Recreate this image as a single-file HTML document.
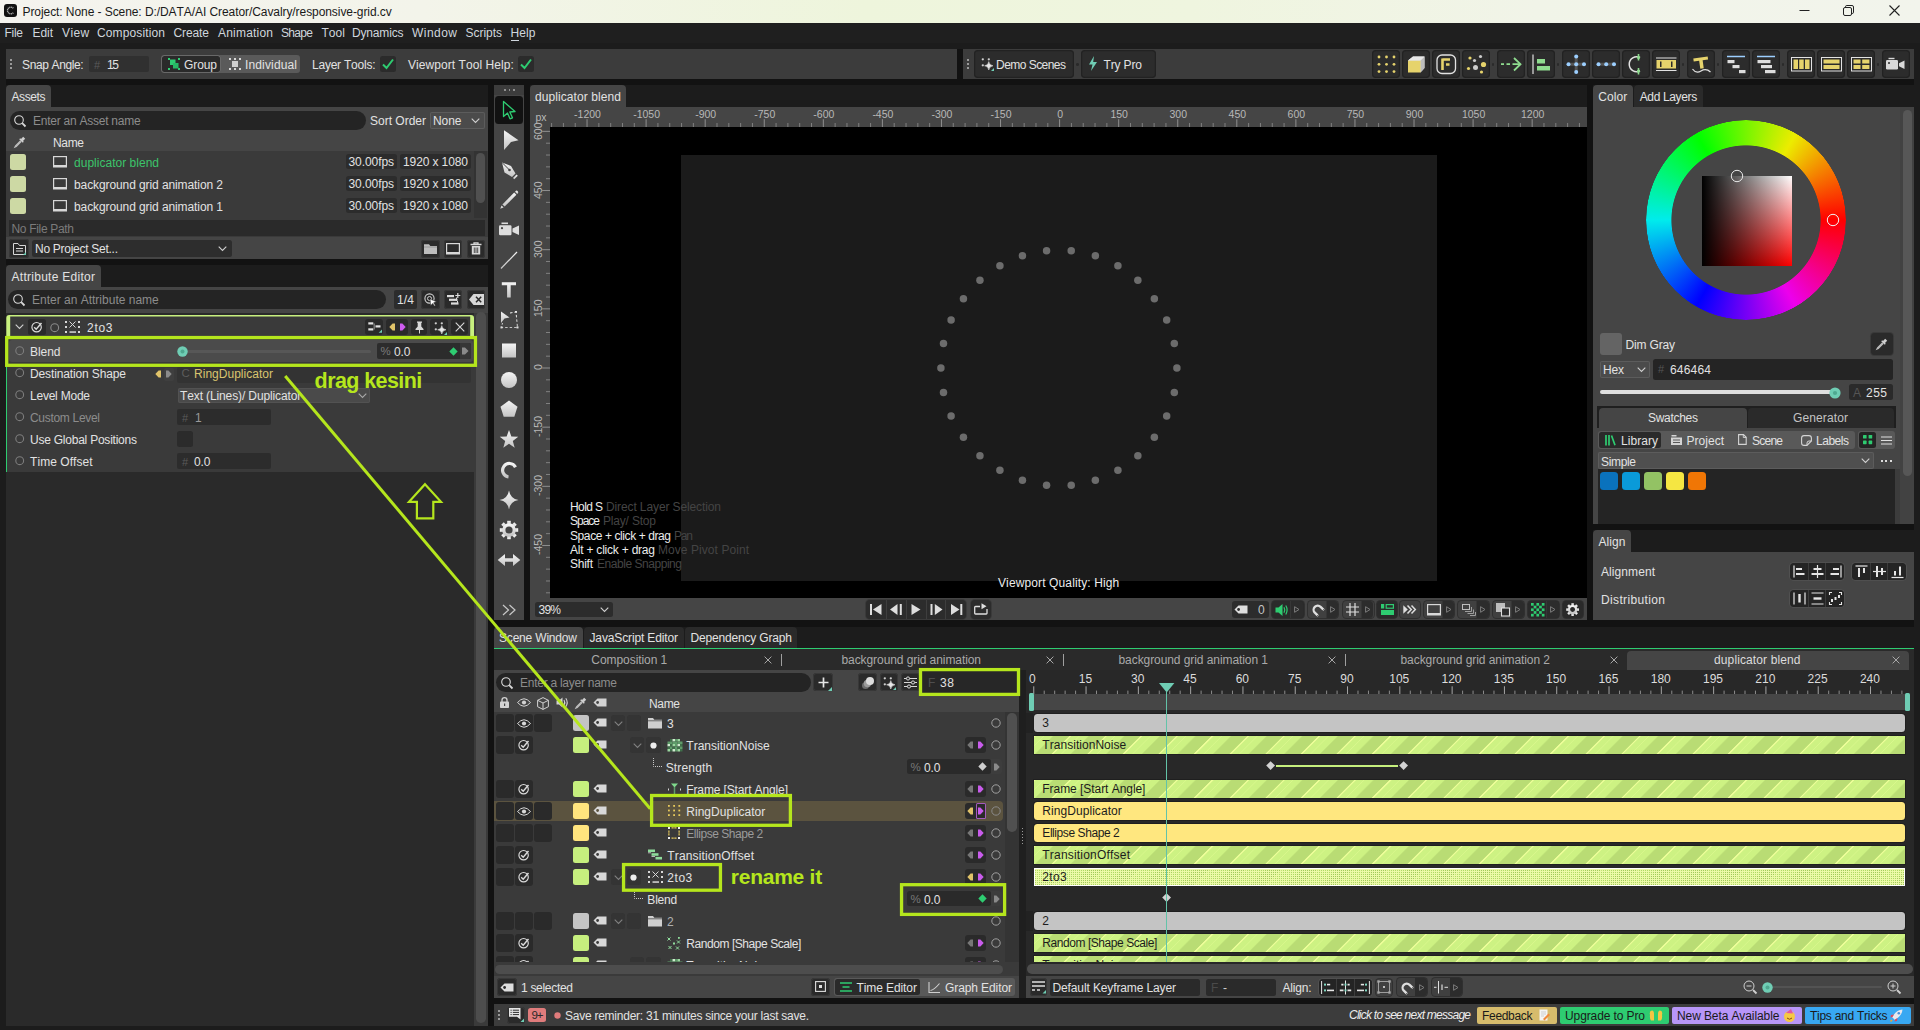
<!DOCTYPE html>
<html><head><meta charset="utf-8"><title>Cavalry</title>
<style>
html,body{margin:0;padding:0;background:#1c1c1c;}
body{width:1920px;height:1030px;position:relative;overflow:hidden;font-family:"Liberation Sans",sans-serif;font-kerning:none;}
div,span.t,svg{position:absolute;}
span.t{white-space:pre;}
svg{overflow:visible;}
</style></head><body>
<div style="left:0.00px;top:0.00px;width:1920.00px;height:23.00px;background:linear-gradient(90deg,#f4f3ee 0%,#f3f4ea 22%,#eef5dc 45%,#eff5df 62%,#f1f4e8 80%,#f2f4ec 100%);"></div>
<svg style="left:3.50px;top:4.30px;" width="13" height="13" viewBox="0 0 13 13"><rect x="0" y="0" width="13" height="13" rx="3" fill="#111"/><path d="M9.3 4.3A3.3 3.3 0 1 0 9.3 8.7" fill="none" stroke="#aaa" stroke-width="1.5" stroke-dasharray="1.1 0.5"/></svg>
<span class="t" style="left:22.50px;top:3.64px;font-size:12px;line-height:16px;color:#1a1a1a;letter-spacing:-0.073px;">Project: None - Scene: D:/DATA/AI Creator/Cavalry/responsive-grid.cv</span>
<svg style="left:1798.50px;top:4.00px;" width="12" height="12" viewBox="0 0 12 12"><path d="M0.5 6.5H10.5" stroke="#222" stroke-width="1"/></svg>
<svg style="left:1843.00px;top:5.00px;" width="12" height="12" viewBox="0 0 12 12"><rect x="0.5" y="2.5" width="8" height="8" rx="1.5" fill="none" stroke="#222"/><path d="M2.5 2.5V1.8Q2.5 0.5 3.8 0.5H9Q10.5 0.5 10.5 2V7.2Q10.5 8.5 9.2 8.5H8.6" fill="none" stroke="#222"/></svg>
<svg style="left:1889.00px;top:5.00px;" width="12" height="12" viewBox="0 0 12 12"><path d="M0.5 0.5L10.5 10.5M10.5 0.5L0.5 10.5" stroke="#222" stroke-width="1.1"/></svg>
<div style="left:0.00px;top:23.00px;width:1920.00px;height:20.00px;background:#1f1f1f;"></div>
<span class="t" style="left:4.50px;top:25.14px;font-size:12px;line-height:16px;color:#cfd6dd;letter-spacing:-0.279px;">File</span>
<span class="t" style="left:32.50px;top:25.14px;font-size:12px;line-height:16px;color:#cfd6dd;letter-spacing:-0.059px;">Edit</span>
<span class="t" style="left:62.00px;top:25.14px;font-size:12px;line-height:16px;color:#cfd6dd;letter-spacing:0.402px;">View</span>
<span class="t" style="left:97.00px;top:25.14px;font-size:12px;line-height:16px;color:#cfd6dd;letter-spacing:0.130px;">Composition</span>
<span class="t" style="left:173.50px;top:25.14px;font-size:12px;line-height:16px;color:#cfd6dd;letter-spacing:-0.104px;">Create</span>
<span class="t" style="left:218.00px;top:25.14px;font-size:12px;line-height:16px;color:#cfd6dd;letter-spacing:0.205px;">Animation</span>
<span class="t" style="left:281.00px;top:25.14px;font-size:12px;line-height:16px;color:#cfd6dd;letter-spacing:-0.675px;">Shape</span>
<span class="t" style="left:321.50px;top:25.14px;font-size:12px;line-height:16px;color:#cfd6dd;">Tool</span>
<span class="t" style="left:352.00px;top:25.14px;font-size:12px;line-height:16px;color:#cfd6dd;letter-spacing:-0.168px;">Dynamics</span>
<span class="t" style="left:412.00px;top:25.14px;font-size:12px;line-height:16px;color:#cfd6dd;letter-spacing:0.464px;">Window</span>
<span class="t" style="left:465.50px;top:25.14px;font-size:12px;line-height:16px;color:#cfd6dd;letter-spacing:-0.029px;">Scripts</span>
<span class="t" style="left:510.50px;top:25.14px;font-size:12px;line-height:16px;color:#cfd6dd;letter-spacing:0.106px;">Help</span>
<div style="left:510.50px;top:39.50px;width:8.00px;height:1.00px;background:#cfd6dd;"></div>
<div style="left:6.00px;top:49.00px;width:1908.00px;height:976.80px;background:#121212;"></div>
<div style="left:6.00px;top:85.00px;width:482.00px;height:22.00px;background:#1c1c1c;"></div>
<div style="left:6.00px;top:265.00px;width:482.00px;height:22.00px;background:#1c1c1c;"></div>
<div style="left:530.00px;top:85.00px;width:1057.00px;height:22.00px;background:#1c1c1c;"></div>
<div style="left:1593.00px;top:85.00px;width:321.00px;height:22.00px;background:#1c1c1c;"></div>
<div style="left:1593.00px;top:530.00px;width:321.00px;height:22.00px;background:#1c1c1c;"></div>
<div style="left:494.00px;top:627.00px;width:1420.00px;height:21.50px;background:#1c1c1c;"></div>
<div style="left:6.00px;top:49.00px;width:951.00px;height:30.00px;background:#3c3c3c;"></div>
<div style="left:10.20px;top:58.50px;width:2.00px;height:2.00px;background:#9a9a9a;"></div>
<div style="left:10.20px;top:62.70px;width:2.00px;height:2.00px;background:#9a9a9a;"></div>
<div style="left:10.20px;top:66.80px;width:2.00px;height:2.00px;background:#9a9a9a;"></div>
<span class="t" style="left:22.00px;top:56.64px;font-size:12px;line-height:16px;color:#e2e2e2;letter-spacing:-0.372px;">Snap Angle:</span>
<div style="left:89.00px;top:56.00px;width:60.00px;height:16.00px;background:#303030;border-radius:2px;"></div>
<span class="t" style="left:94.00px;top:57.63px;font-size:11px;line-height:14px;color:#5a5a5a;">#</span>
<span class="t" style="left:107.00px;top:56.64px;font-size:12px;line-height:16px;color:#e2e2e2;letter-spacing:-1.348px;">15</span>
<div style="left:161.00px;top:55.00px;width:139.00px;height:18.00px;background:#5a5a5a;border-radius:3px;"></div>
<div style="left:162.00px;top:56.00px;width:58.00px;height:16.00px;background:#2a2a2a;border-radius:2.5px;box-shadow:0 0 0 0.5px #777;"></div>
<svg style="left:168.00px;top:58.00px;" width="12" height="12" viewBox="0 0 12 12"><rect x="0" y="0" width="2" height="2" fill="#2ecc71"/><rect x="10" y="0" width="2" height="2" fill="#2ecc71"/><rect x="0" y="10" width="2" height="2" fill="#2ecc71"/><rect x="10" y="10" width="2" height="2" fill="#2ecc71"/><rect x="2" y="1.5" width="5.5" height="5.5" fill="#2ecc71"/><rect x="5" y="5" width="5.5" height="5.5" fill="#27b865"/></svg>
<span class="t" style="left:184.00px;top:56.64px;font-size:12px;line-height:16px;color:#e2e2e2;letter-spacing:-0.088px;">Group</span>
<svg style="left:229.00px;top:58.00px;" width="12" height="12" viewBox="0 0 12 12"><rect x="0" y="0" width="2" height="2" fill="#d8d8d8"/><rect x="10" y="0" width="2" height="2" fill="#d8d8d8"/><rect x="0" y="10" width="2" height="2" fill="#d8d8d8"/><rect x="10" y="10" width="2" height="2" fill="#d8d8d8"/><rect x="5" y="0" width="2" height="2" fill="#d8d8d8"/><rect x="5" y="10" width="2" height="2" fill="#d8d8d8"/><rect x="3" y="3" width="6" height="6" fill="#cfcfcf"/></svg>
<span class="t" style="left:245.00px;top:56.64px;font-size:12px;line-height:16px;color:#e2e2e2;letter-spacing:0.144px;">Individual</span>
<span class="t" style="left:312.00px;top:56.64px;font-size:12px;line-height:16px;color:#e2e2e2;letter-spacing:-0.226px;">Layer Tools:</span>
<div style="left:380.00px;top:56.00px;width:16.00px;height:16.00px;background:#2b2b2b;border-radius:2.5px;"></div>
<svg style="left:380.00px;top:56.00px;" width="16" height="16" viewBox="0 0 16 16"><path d="M3 8.5L6.5 12L13 3.5" fill="none" stroke="#2ecc71" stroke-width="2"/></svg>
<span class="t" style="left:408.00px;top:56.64px;font-size:12px;line-height:16px;color:#e2e2e2;letter-spacing:0.058px;">Viewport Tool Help:</span>
<div style="left:518.00px;top:56.00px;width:16.00px;height:16.00px;background:#2b2b2b;border-radius:2.5px;"></div>
<svg style="left:518.00px;top:56.00px;" width="16" height="16" viewBox="0 0 16 16"><path d="M3 8.5L6.5 12L13 3.5" fill="none" stroke="#2ecc71" stroke-width="2"/></svg>
<div style="left:963.00px;top:49.00px;width:951.00px;height:30.00px;background:#3c3c3c;"></div>
<div style="left:967.00px;top:58.50px;width:2.00px;height:2.00px;background:#9a9a9a;"></div>
<div style="left:967.00px;top:62.70px;width:2.00px;height:2.00px;background:#9a9a9a;"></div>
<div style="left:967.00px;top:66.80px;width:2.00px;height:2.00px;background:#9a9a9a;"></div>
<div style="left:974.00px;top:50.00px;width:99.50px;height:27.50px;background:#2c2c2c;border-radius:4px;box-shadow:0 0 0 1.2px #222 inset;"></div>
<div style="left:1081.00px;top:50.00px;width:75.00px;height:27.50px;background:#2c2c2c;border-radius:4px;box-shadow:0 0 0 1.2px #222 inset;"></div>
<svg style="left:980.00px;top:57.00px;" width="14" height="14" viewBox="0 0 14 14"><path d="M8.8 4.6Q9.3 8.3 13 8.8Q9.3 9.3 8.8 13Q8.3 9.3 4.6 8.8Q8.3 8.3 8.8 4.6Z" fill="#e8e8e8" stroke="#e8e8e8" stroke-width="0.5"/><circle cx="2.8" cy="2.3" r="1.15" fill="#cfcfcf"/><circle cx="8.8" cy="2.3" r="1.15" fill="#cfcfcf"/><circle cx="2.8" cy="8.3" r="1.15" fill="#cfcfcf"/><path d="M14 11V14H11Z" fill="#6fcdb4"/></svg>
<span class="t" style="left:996.00px;top:57.24px;font-size:12px;line-height:16px;color:#e2e2e2;letter-spacing:-0.537px;">Demo Scenes</span>
<div style="left:1076.00px;top:63.00px;width:2.60px;height:2.60px;background:#2a2a2a;border-radius:1.3px;"></div>
<svg style="left:1088.00px;top:56.00px;" width="10" height="16" viewBox="0 0 10 16"><path d="M6 0L1 8.5H4.5L3 15L9 6H5.2Z" fill="#6fcdb4"/></svg>
<span class="t" style="left:1103.50px;top:57.24px;font-size:12px;line-height:16px;color:#e2e2e2;letter-spacing:-0.148px;">Try Pro</span>
<div style="left:1372.00px;top:50.00px;width:27.50px;height:27.50px;background:#2c2c2c;border-radius:4px;box-shadow:0 0 0 1.2px #222 inset;"></div>
<div style="left:1402.00px;top:50.00px;width:27.50px;height:27.50px;background:#2c2c2c;border-radius:4px;box-shadow:0 0 0 1.2px #222 inset;"></div>
<div style="left:1432.00px;top:50.00px;width:27.50px;height:27.50px;background:#2c2c2c;border-radius:4px;box-shadow:0 0 0 1.2px #222 inset;"></div>
<div style="left:1462.00px;top:50.00px;width:27.50px;height:27.50px;background:#2c2c2c;border-radius:4px;box-shadow:0 0 0 1.2px #222 inset;"></div>
<div style="left:1497.00px;top:50.00px;width:27.50px;height:27.50px;background:#2c2c2c;border-radius:4px;box-shadow:0 0 0 1.2px #222 inset;"></div>
<div style="left:1527.00px;top:50.00px;width:27.50px;height:27.50px;background:#2c2c2c;border-radius:4px;box-shadow:0 0 0 1.2px #222 inset;"></div>
<div style="left:1562.00px;top:50.00px;width:27.50px;height:27.50px;background:#2c2c2c;border-radius:4px;box-shadow:0 0 0 1.2px #222 inset;"></div>
<div style="left:1592.00px;top:50.00px;width:27.50px;height:27.50px;background:#2c2c2c;border-radius:4px;box-shadow:0 0 0 1.2px #222 inset;"></div>
<div style="left:1622.00px;top:50.00px;width:27.50px;height:27.50px;background:#2c2c2c;border-radius:4px;box-shadow:0 0 0 1.2px #222 inset;"></div>
<div style="left:1652.00px;top:50.00px;width:27.50px;height:27.50px;background:#2c2c2c;border-radius:4px;box-shadow:0 0 0 1.2px #222 inset;"></div>
<div style="left:1687.00px;top:50.00px;width:27.50px;height:27.50px;background:#2c2c2c;border-radius:4px;box-shadow:0 0 0 1.2px #222 inset;"></div>
<div style="left:1722.00px;top:50.00px;width:27.50px;height:27.50px;background:#2c2c2c;border-radius:4px;box-shadow:0 0 0 1.2px #222 inset;"></div>
<div style="left:1752.00px;top:50.00px;width:27.50px;height:27.50px;background:#2c2c2c;border-radius:4px;box-shadow:0 0 0 1.2px #222 inset;"></div>
<div style="left:1787.00px;top:50.00px;width:27.50px;height:27.50px;background:#2c2c2c;border-radius:4px;box-shadow:0 0 0 1.2px #222 inset;"></div>
<div style="left:1817.00px;top:50.00px;width:27.50px;height:27.50px;background:#2c2c2c;border-radius:4px;box-shadow:0 0 0 1.2px #222 inset;"></div>
<div style="left:1847.00px;top:50.00px;width:27.50px;height:27.50px;background:#2c2c2c;border-radius:4px;box-shadow:0 0 0 1.2px #222 inset;"></div>
<div style="left:1882.00px;top:50.00px;width:27.50px;height:27.50px;background:#2c2c2c;border-radius:4px;box-shadow:0 0 0 1.2px #222 inset;"></div>
<div style="left:1491.70px;top:63.00px;width:2.60px;height:2.60px;background:#2a2a2a;border-radius:1.3px;"></div>
<div style="left:1556.70px;top:63.00px;width:2.60px;height:2.60px;background:#2a2a2a;border-radius:1.3px;"></div>
<div style="left:1681.70px;top:63.00px;width:2.60px;height:2.60px;background:#2a2a2a;border-radius:1.3px;"></div>
<div style="left:1716.70px;top:63.00px;width:2.60px;height:2.60px;background:#2a2a2a;border-radius:1.3px;"></div>
<div style="left:1781.70px;top:63.00px;width:2.60px;height:2.60px;background:#2a2a2a;border-radius:1.3px;"></div>
<div style="left:1876.70px;top:63.00px;width:2.60px;height:2.60px;background:#2a2a2a;border-radius:1.3px;"></div>
<svg style="left:1372.50px;top:50.50px;" width="26.5" height="26.5" viewBox="0 0 26.5 26.5"><circle cx="6" cy="6" r="1.4" fill="#e6d36c"/><circle cx="6" cy="13.3" r="1.4" fill="#e6d36c"/><circle cx="6" cy="20.6" r="1.4" fill="#e6d36c"/><circle cx="13.5" cy="6" r="1.4" fill="#e6d36c"/><circle cx="13.5" cy="13.3" r="1.4" fill="#e6d36c"/><circle cx="13.5" cy="20.6" r="1.4" fill="#e6d36c"/><circle cx="21" cy="6" r="1.4" fill="#e6d36c"/><circle cx="21" cy="13.3" r="1.4" fill="#e6d36c"/><circle cx="21" cy="20.6" r="1.4" fill="#e6d36c"/></svg>
<svg style="left:1402.50px;top:50.50px;" width="26.5" height="26.5" viewBox="0 0 26.5 26.5"><path d="M5 9.5L10 5.5H21.5V17L17.5 21.5" fill="#d6d6d6"/><path d="M17.5 9.5L21.5 5.5V17L17.5 21.5Z" fill="#bdbdbd"/><rect x="5" y="9.5" width="12.5" height="12" fill="#e6d36c"/><path d="M5 9.5L10 5.5H21.5L17.5 9.5Z" fill="#e8e8e8"/></svg>
<svg style="left:1432.50px;top:50.50px;" width="26.5" height="26.5" viewBox="0 0 26.5 26.5"><rect x="4" y="4" width="18.5" height="18.5" rx="5" fill="none" stroke="#e2e2e2" stroke-width="1.3"/><path d="M9.5 7.5V19M9.5 8.5H17M13 13.5H16.5" stroke="#e6d36c" stroke-width="2.6" fill="none"/></svg>
<svg style="left:1462.50px;top:50.50px;" width="26.5" height="26.5" viewBox="0 0 26.5 26.5"><circle cx="7" cy="7" r="1.6" fill="#e6d36c"/><circle cx="17.5" cy="5.5" r="1.6" fill="#ccc"/><circle cx="11.5" cy="9.5" r="1.6" fill="#ccc"/><circle cx="20.5" cy="13.5" r="2.6" fill="#e6d36c"/><circle cx="12.5" cy="16.5" r="2.5" fill="#ccc"/><circle cx="5.5" cy="17.5" r="1.6" fill="#e6d36c"/><circle cx="18.5" cy="21" r="1.6" fill="#e6d36c"/></svg>
<svg style="left:1497.50px;top:50.50px;" width="26.5" height="26.5" viewBox="0 0 26.5 26.5"><path d="M3 13.2H6M8.5 13.2H12M14.5 13.2H22" stroke="#8fdc8f" stroke-width="1.8"/><path d="M16 7L22.5 13.2L16 19.5" fill="none" stroke="#8fdc8f" stroke-width="1.8"/></svg>
<svg style="left:1527.50px;top:50.50px;" width="26.5" height="26.5" viewBox="0 0 26.5 26.5"><path d="M5 3.5V23" stroke="#e2e2e2" stroke-width="1.2"/><rect x="9" y="8" width="8" height="4.5" fill="#8fdc8f"/><rect x="9" y="15" width="13" height="4.5" fill="#8fdc8f"/></svg>
<svg style="left:1562.50px;top:50.50px;" width="26.5" height="26.5" viewBox="0 0 26.5 26.5"><path d="M13.2 6V20.5M6 13.2H20.5" stroke="#555" stroke-width="3"/><circle cx="13.2" cy="5.5" r="2" fill="#9ccfff"/><circle cx="13.2" cy="13.2" r="2" fill="#9ccfff"/><circle cx="13.2" cy="21" r="2" fill="#9ccfff"/><circle cx="5.5" cy="13.2" r="2" fill="#9ccfff"/><circle cx="21" cy="13.2" r="2" fill="#9ccfff"/></svg>
<svg style="left:1592.50px;top:50.50px;" width="26.5" height="26.5" viewBox="0 0 26.5 26.5"><path d="M5 13.2H21" stroke="#555" stroke-width="3"/><circle cx="5.5" cy="13.2" r="2" fill="#9ccfff"/><circle cx="13.2" cy="13.2" r="2" fill="#9ccfff"/><circle cx="21" cy="13.2" r="2" fill="#9ccfff"/></svg>
<svg style="left:1622.50px;top:50.50px;" width="26.5" height="26.5" viewBox="0 0 26.5 26.5"><path d="M17 6.5A7.5 7.5 0 1 0 17 20" fill="none" stroke="#e2e2e2" stroke-width="1.5"/><path d="M15.5 3V9.5M15.5 17V23.5" stroke="#8fdc8f" stroke-width="1.6"/><circle cx="15.5" cy="6.5" r="1.6" fill="#8fdc8f"/><circle cx="15.5" cy="20" r="1.6" fill="#8fdc8f"/></svg>
<svg style="left:1652.50px;top:50.50px;" width="26.5" height="26.5" viewBox="0 0 26.5 26.5"><rect x="3.5" y="9" width="19.5" height="8.5" fill="#e6d36c"/><rect x="7" y="10.5" width="1.5" height="5.5" fill="#2b2b2b"/><rect x="18" y="10.5" width="1.5" height="5.5" fill="#2b2b2b"/><path d="M3 7H23.5M3 19.5H23.5" stroke="#e2e2e2" stroke-width="1"/></svg>
<svg style="left:1687.50px;top:50.50px;" width="26.5" height="26.5" viewBox="0 0 26.5 26.5"><path d="M6 6.5H20.5V9.5H15V17.5H11.5V9.5H6Z" fill="#e6d36c" transform="rotate(-8 13 12)"/><path d="M4.5 18Q8 23 13 20T22.5 21" fill="none" stroke="#e2e2e2" stroke-width="1.2"/></svg>
<svg style="left:1722.50px;top:50.50px;" width="26.5" height="26.5" viewBox="0 0 26.5 26.5"><path d="M4 5.5H22" stroke="#9ccfff" stroke-width="1.5"/><rect x="4.5" y="9" width="7" height="3.2" fill="#ddd"/><rect x="9.5" y="14" width="7" height="3.2" fill="#ddd"/><rect x="16" y="19" width="6.5" height="3.2" fill="#ddd"/></svg>
<svg style="left:1752.50px;top:50.50px;" width="26.5" height="26.5" viewBox="0 0 26.5 26.5"><path d="M4 5.5H22" stroke="#9ccfff" stroke-width="1.5"/><rect x="4.5" y="9" width="13" height="3.2" fill="#ddd"/><rect x="8" y="14" width="11" height="3.2" fill="#ddd"/><rect x="12" y="19" width="10.5" height="3.2" fill="#ddd"/></svg>
<svg style="left:1787.50px;top:50.50px;" width="26.5" height="26.5" viewBox="0 0 26.5 26.5"><rect x="3.5" y="6.5" width="20" height="13.5" fill="none" stroke="#e2e2e2" stroke-width="1"/><rect x="5.5" y="8.5" width="4.5" height="9.5" fill="#e6d36c"/><rect x="11.2" y="8.5" width="4.5" height="9.5" fill="#e6d36c"/><rect x="17" y="8.5" width="4.5" height="9.5" fill="#e6d36c"/></svg>
<svg style="left:1817.50px;top:50.50px;" width="26.5" height="26.5" viewBox="0 0 26.5 26.5"><rect x="3.5" y="6.5" width="20" height="13.5" fill="none" stroke="#e2e2e2" stroke-width="1"/><rect x="5.5" y="8.5" width="16" height="4" fill="#e6d36c"/><rect x="5.5" y="14" width="16" height="4" fill="#e6d36c"/></svg>
<svg style="left:1847.50px;top:50.50px;" width="26.5" height="26.5" viewBox="0 0 26.5 26.5"><rect x="3.5" y="6.5" width="20" height="13.5" fill="none" stroke="#e2e2e2" stroke-width="1"/><rect x="5.5" y="8.5" width="7" height="4" fill="#e6d36c"/><rect x="14.2" y="8.5" width="7.2" height="4" fill="#e6d36c"/><rect x="5.5" y="14" width="7" height="4" fill="#e6d36c"/><rect x="14.2" y="14" width="7.2" height="4" fill="#e6d36c"/></svg>
<svg style="left:1886.00px;top:57.00px;" width="19" height="13" viewBox="0 0 19 13"><rect x="0" y="3" width="12" height="9.5" rx="1.2" fill="#d8d8d8"/><path d="M13 6.2L18.5 3.5V12L13 9.3Z" fill="#d8d8d8"/><rect x="2.5" y="0.8" width="6" height="1.4" fill="#d8d8d8"/><circle cx="3" cy="6" r="1" fill="#2b2b2b"/></svg>
<div style="left:6.00px;top:85.00px;width:45.00px;height:22.50px;background:#454545;border-radius:4px 4px 0 0;"></div>
<span class="t" style="left:11.50px;top:89.44px;font-size:12px;line-height:16px;color:#e2e2e2;letter-spacing:-0.402px;">Assets</span>
<div style="left:6.00px;top:107.00px;width:482.00px;height:151.60px;background:#454545;"></div>
<div style="left:6.00px;top:151.00px;width:482.00px;height:86.00px;background:#3a3a3a;"></div>
<div style="left:474.00px;top:151.00px;width:12.50px;height:67.00px;background:#333;"></div>
<div style="left:9.50px;top:110.50px;width:356.50px;height:19.50px;background:#242424;border-radius:10px;"></div>
<svg style="left:13.50px;top:114.50px;" width="12" height="12" viewBox="0 0 12 12"><circle cx="5" cy="5" r="4.3" fill="none" stroke="#d8d8d8" stroke-width="1.1"/><path d="M8.2 8.2L11.5 11.5" stroke="#d8d8d8" stroke-width="1.8"/></svg>
<span class="t" style="left:33.00px;top:112.64px;font-size:12px;line-height:16px;color:#8c8c8c;letter-spacing:-0.245px;">Enter an Asset name</span>
<span class="t" style="left:370.00px;top:112.64px;font-size:12px;line-height:16px;color:#e2e2e2;">Sort Order</span>
<div style="left:429.50px;top:111.50px;width:55.00px;height:17.00px;background:#4b4b4b;border-radius:2px;box-shadow:0 0 0 1px #5c5c5c inset;"></div>
<span class="t" style="left:433.00px;top:112.64px;font-size:12px;line-height:16px;color:#e2e2e2;letter-spacing:-0.063px;">None</span>
<svg style="left:471.00px;top:118.00px;" width="9" height="6" viewBox="0 0 9 6"><path d="M0.7 0.7L4.5 4.5L8.3 0.7" fill="none" stroke="#d0d0d0" stroke-width="1.1"/></svg>
<svg style="left:14.00px;top:136.00px;" width="12" height="12" viewBox="0 0 12 12"><path d="M9.2 0.8L11.2 2.8L9 5L9.8 5.8L8.8 6.8L5.2 3.2L6.2 2.2L7 3Z" fill="#cfcfcf"/><path d="M6.6 4.6L1.5 9.7L0.8 11.2L2.3 10.5L7.4 5.4" fill="none" stroke="#bdbdbd" stroke-width="1.1"/></svg>
<span class="t" style="left:53.00px;top:135.44px;font-size:12px;line-height:16px;color:#e2e2e2;letter-spacing:-0.337px;">Name</span>
<div style="left:10.00px;top:154.00px;width:16.00px;height:16.00px;background:#cdd9a4;border-radius:2.5px;"></div>
<svg style="left:53.00px;top:155.70px;" width="14" height="12" viewBox="0 0 14 12"><rect x="0.6" y="0.6" width="12.8" height="9" fill="none" stroke="#d8d8d8" stroke-width="1.2"/><rect x="0" y="9.2" width="14" height="2.3" fill="#d8d8d8"/></svg>
<span class="t" style="left:74.00px;top:154.64px;font-size:12px;line-height:16px;color:#3cc46a;letter-spacing:0.018px;">duplicator blend</span>
<div style="left:346.00px;top:154.20px;width:51.00px;height:15.30px;background:#2c2c2c;border-radius:2.5px;"></div>
<span class="t" style="left:348.50px;top:153.84px;font-size:12px;line-height:16px;color:#e2e2e2;letter-spacing:-0.077px;">30.00fps</span>
<div style="left:400.00px;top:154.20px;width:71.00px;height:15.30px;background:#2c2c2c;border-radius:2.5px;"></div>
<span class="t" style="left:403.00px;top:153.84px;font-size:12px;line-height:16px;color:#e2e2e2;letter-spacing:-0.106px;">1920 x 1080</span>
<div style="left:10.00px;top:176.00px;width:16.00px;height:16.00px;background:#cdd9a4;border-radius:2.5px;"></div>
<svg style="left:53.00px;top:177.70px;" width="14" height="12" viewBox="0 0 14 12"><rect x="0.6" y="0.6" width="12.8" height="9" fill="none" stroke="#d8d8d8" stroke-width="1.2"/><rect x="0" y="9.2" width="14" height="2.3" fill="#d8d8d8"/></svg>
<span class="t" style="left:74.00px;top:176.64px;font-size:12px;line-height:16px;color:#e2e2e2;letter-spacing:-0.094px;">background grid animation 2</span>
<div style="left:346.00px;top:176.20px;width:51.00px;height:15.30px;background:#2c2c2c;border-radius:2.5px;"></div>
<span class="t" style="left:348.50px;top:175.84px;font-size:12px;line-height:16px;color:#e2e2e2;letter-spacing:-0.077px;">30.00fps</span>
<div style="left:400.00px;top:176.20px;width:71.00px;height:15.30px;background:#2c2c2c;border-radius:2.5px;"></div>
<span class="t" style="left:403.00px;top:175.84px;font-size:12px;line-height:16px;color:#e2e2e2;letter-spacing:-0.106px;">1920 x 1080</span>
<div style="left:10.00px;top:198.00px;width:16.00px;height:16.00px;background:#cdd9a4;border-radius:2.5px;"></div>
<svg style="left:53.00px;top:199.70px;" width="14" height="12" viewBox="0 0 14 12"><rect x="0.6" y="0.6" width="12.8" height="9" fill="none" stroke="#d8d8d8" stroke-width="1.2"/><rect x="0" y="9.2" width="14" height="2.3" fill="#d8d8d8"/></svg>
<span class="t" style="left:74.00px;top:198.64px;font-size:12px;line-height:16px;color:#e2e2e2;letter-spacing:-0.094px;">background grid animation 1</span>
<div style="left:346.00px;top:198.20px;width:51.00px;height:15.30px;background:#2c2c2c;border-radius:2.5px;"></div>
<span class="t" style="left:348.50px;top:197.84px;font-size:12px;line-height:16px;color:#e2e2e2;letter-spacing:-0.077px;">30.00fps</span>
<div style="left:400.00px;top:198.20px;width:71.00px;height:15.30px;background:#2c2c2c;border-radius:2.5px;"></div>
<span class="t" style="left:403.00px;top:197.84px;font-size:12px;line-height:16px;color:#e2e2e2;letter-spacing:-0.106px;">1920 x 1080</span>
<div style="left:476.20px;top:152.50px;width:8.80px;height:50.50px;background:#505050;border-radius:4.4px;"></div>
<div style="left:8.50px;top:220.00px;width:476.80px;height:16.30px;background:#2a2a2a;"></div>
<span class="t" style="left:11.50px;top:220.74px;font-size:12px;line-height:16px;color:#7b7b7b;letter-spacing:-0.321px;">No File Path</span>
<div style="left:9.00px;top:239.00px;width:20.00px;height:18.50px;background:#2a2a2a;border-radius:3px;box-shadow:0 0 0 1px #383838 inset;"></div>
<svg style="left:12.50px;top:242.50px;" width="13" height="12" viewBox="0 0 13 12"><path d="M0.5 0.5H5L6.5 2.5H12.5V11.5H0.5Z" fill="none" stroke="#d8d8d8" stroke-width="1"/><path d="M3 5.5H10M3 8H10" stroke="#d8d8d8" stroke-width="1.2"/><path d="M13 9V12H10Z" fill="#6fcdb4"/></svg>
<div style="left:32.00px;top:239.50px;width:200.00px;height:17.50px;background:#2d2d2d;border-radius:2.5px;"></div>
<span class="t" style="left:35.00px;top:240.74px;font-size:12px;line-height:16px;color:#e2e2e2;letter-spacing:-0.273px;">No Project Set...</span>
<svg style="left:218.00px;top:245.50px;" width="9" height="6" viewBox="0 0 9 6"><path d="M0.7 0.7L4.5 4.5L8.3 0.7" fill="none" stroke="#d0d0d0" stroke-width="1.1"/></svg>
<div style="left:421.00px;top:239.50px;width:18.50px;height:18.00px;background:#2a2a2a;border-radius:3px;box-shadow:0 0 0 1px #383838 inset;"></div>
<div style="left:443.50px;top:239.50px;width:18.50px;height:18.00px;background:#2a2a2a;border-radius:3px;box-shadow:0 0 0 1px #383838 inset;"></div>
<div style="left:466.50px;top:239.50px;width:18.50px;height:18.00px;background:#2a2a2a;border-radius:3px;box-shadow:0 0 0 1px #383838 inset;"></div>
<svg style="left:424.00px;top:243.00px;" width="13" height="11" viewBox="0 0 13 11"><path d="M0 1.2H5L6.3 3H13V11H0Z" fill="#bdbdbd"/><path d="M0 4H13" stroke="#8d8d8d" stroke-width="0.8"/></svg>
<svg style="left:446.00px;top:243.00px;" width="14" height="12" viewBox="0 0 14 12"><rect x="0.6" y="0.6" width="12.8" height="9" fill="none" stroke="#d8d8d8" stroke-width="1.2"/><rect x="0" y="9.2" width="14" height="2.3" fill="#d8d8d8"/></svg>
<svg style="left:470.00px;top:242.00px;" width="12" height="13" viewBox="0 0 12 13"><path d="M0.5 2.5H11.5M4 2.5V0.8H8V2.5" fill="none" stroke="#d8d8d8" stroke-width="1.3"/><path d="M1.8 4H10.2V12.5H1.8Z" fill="#d8d8d8"/><path d="M4.3 5.5V11M6 5.5V11M7.7 5.5V11" stroke="#2a2a2a" stroke-width="0.8"/></svg>
<div style="left:6.00px;top:265.00px;width:95.00px;height:22.50px;background:#454545;border-radius:4px 4px 0 0;"></div>
<span class="t" style="left:11.50px;top:269.44px;font-size:12px;line-height:16px;color:#e2e2e2;letter-spacing:0.275px;">Attribute Editor</span>
<div style="left:6.00px;top:287.00px;width:482.00px;height:738.80px;background:#2a2a2a;"></div>
<div style="left:6.00px;top:287.00px;width:482.00px;height:26.00px;background:#454545;"></div>
<div style="left:8.00px;top:289.50px;width:378.00px;height:19.00px;background:#242424;border-radius:10px;"></div>
<svg style="left:12.50px;top:293.50px;" width="12" height="12" viewBox="0 0 12 12"><circle cx="5" cy="5" r="4.3" fill="none" stroke="#d8d8d8" stroke-width="1.1"/><path d="M8.2 8.2L11.5 11.5" stroke="#d8d8d8" stroke-width="1.8"/></svg>
<span class="t" style="left:32.00px;top:291.64px;font-size:12px;line-height:16px;color:#8c8c8c;">Enter an Attribute name</span>
<div style="left:394.00px;top:290.00px;width:23.00px;height:18.50px;background:#2c2c2c;border-radius:2px;"></div>
<span class="t" style="left:397.00px;top:292.14px;font-size:12px;line-height:16px;color:#e2e2e2;letter-spacing:0.159px;">1/4</span>
<div style="left:421.00px;top:290.00px;width:18.50px;height:18.50px;background:#2a2a2a;border-radius:3px;box-shadow:0 0 0 1px #383838 inset;"></div>
<div style="left:443.50px;top:290.00px;width:18.50px;height:18.50px;background:#2a2a2a;border-radius:3px;box-shadow:0 0 0 1px #383838 inset;"></div>
<div style="left:466.50px;top:290.00px;width:18.50px;height:18.50px;background:#2a2a2a;border-radius:3px;box-shadow:0 0 0 1px #383838 inset;"></div>
<svg style="left:424.00px;top:293.00px;" width="13" height="13" viewBox="0 0 13 13"><circle cx="5.5" cy="5.5" r="4.6" fill="none" stroke="#cfcfcf" stroke-width="1.1"/><circle cx="5.5" cy="5.5" r="2" fill="none" stroke="#cfcfcf" stroke-width="1"/><path d="M6 6L12.5 8.8L9.6 9.8L11.4 12.4L10.4 13L8.7 10.4L6.8 12.5Z" fill="#fff" stroke="#2a2a2a" stroke-width="0.5"/></svg>
<svg style="left:446.80px;top:293.30px;" width="14" height="12" viewBox="0 0 14 12"><rect x="0" y="2" width="7" height="2.2" fill="#dcdcdc"/><rect x="2" y="5.7" width="8.5" height="2.2" fill="#dcdcdc"/><rect x="4" y="9.4" width="7.5" height="2.2" fill="#dcdcdc"/><path d="M9.5 4.5V8M10.5 8V11" stroke="#dcdcdc" stroke-width="1"/><path d="M10.8 0V5M8.3 2.5H13.3" stroke="#dcdcdc" stroke-width="1.2"/></svg>
<svg style="left:468.50px;top:294.00px;" width="15" height="11" viewBox="0 0 15 11"><path d="M4.5 0H15V11H4.5L0 5.5Z" fill="#d8d8d8"/><path d="M7 2.8L12.2 8.2M12.2 2.8L7 8.2" stroke="#2a2a2a" stroke-width="1.5"/></svg>
<div style="left:7.00px;top:316.00px;width:467.00px;height:156.00px;background:#3a3a3a;"></div>
<div style="left:6.00px;top:367.00px;width:1.00px;height:105.00px;background:#2ecc71;"></div>
<div style="left:7.00px;top:316.00px;width:467.00px;height:21.00px;background:#3a3a3a;"></div>
<svg style="left:15.00px;top:323.50px;" width="9" height="6" viewBox="0 0 9 6"><path d="M0.7 0.7L4.5 4.5L8.3 0.7" fill="none" stroke="#d0d0d0" stroke-width="1.1"/></svg>
<div style="left:28.00px;top:318.50px;width:18.00px;height:16.50px;background:#2a2a2a;border-radius:2.5px;"></div>
<svg style="left:31.20px;top:320.70px;" width="12" height="12" viewBox="0 0 12 12"><circle cx="5.6" cy="6.2" r="4.7" fill="none" stroke="#dcdcdc" stroke-width="1.15"/><path d="M3.2 6.2L5.2 8.2L10.5 2" fill="none" stroke="#dcdcdc" stroke-width="1.4"/></svg>
<svg style="left:50.00px;top:322.50px;" width="10" height="10" viewBox="0 0 10 10"><circle cx="4.7" cy="4.7" r="3.9" fill="none" stroke="#8a8a8a" stroke-width="1.1"/></svg>
<svg style="left:65.00px;top:320.50px;" width="15" height="12" viewBox="0 0 15 12"><g fill="#d8d8d8"><rect x="0" y="0" width="2" height="2"/><rect x="0" y="5" width="2" height="2"/><rect x="0" y="10" width="2" height="2"/><rect x="13" y="0" width="2" height="2"/><rect x="13" y="5" width="2" height="2"/><rect x="13" y="10" width="2" height="2"/><rect x="4.5" y="10.3" width="6.5" height="1.5"/></g><path d="M4.5 0.5L10.5 6.5M10.5 0.5L4.5 6.5" stroke="#d8d8d8" stroke-width="1"/></svg>
<span class="t" style="left:87.00px;top:319.64px;font-size:12px;line-height:16px;color:#e2e2e2;letter-spacing:0.715px;">2to3</span>
<div style="left:365.00px;top:318.50px;width:17.50px;height:16.50px;background:#2a2a2a;border-radius:3px;"></div>
<div style="left:385.50px;top:318.50px;width:22.00px;height:16.50px;background:#2a2a2a;border-radius:3px;"></div>
<div style="left:411.00px;top:318.50px;width:16.00px;height:16.50px;background:#2a2a2a;border-radius:3px;"></div>
<div style="left:430.00px;top:318.50px;width:17.50px;height:16.50px;background:#2a2a2a;border-radius:3px;"></div>
<div style="left:451.00px;top:318.50px;width:16.50px;height:16.50px;background:#2a2a2a;border-radius:3px;"></div>
<svg style="left:367.80px;top:321.30px;" width="14" height="12" viewBox="0 0 14 12"><rect x="0.3" y="1.3" width="5" height="2.2" fill="#e2e2e2"/><rect x="0.3" y="7.3" width="5" height="2.2" fill="#e2e2e2"/><rect x="7.5" y="4.3" width="5" height="2.2" fill="#e2e2e2"/><path d="M6.2 2.4V8.4" stroke="#8a8a8a" stroke-width="1.2"/><path d="M14 8.5V11.8H10.7Z" fill="#6fcdb4"/></svg>
<svg style="left:388.50px;top:322.70px;" width="6" height="8" viewBox="0 0 6 8"><path d="M6 0.5H3.6L0.3 4L3.6 7.5H6Z" fill="#e0c369"/></svg>
<svg style="left:399.50px;top:322.70px;" width="6" height="8" viewBox="0 0 6 8"><path d="M0 0.5H2.4L5.7 4L2.4 7.5H0Z" fill="#cf5cf0"/></svg>
<svg style="left:414.50px;top:320.50px;" width="9" height="13" viewBox="0 0 9 13"><path d="M2 0.5H7V1.8H6.3V5.5L8.5 8V9H5V12.5H4V9H0.5V8L2.7 5.5V1.8H2Z" fill="#d8d8d8"/></svg>
<svg style="left:432.50px;top:320.50px;" width="13" height="13" viewBox="0 0 13 13"><path d="M8.8 4.6Q9.3 8.3 13 8.8Q9.3 9.3 8.8 13Q8.3 9.3 4.6 8.8Q8.3 8.3 8.8 4.6Z" fill="#e8e8e8" stroke="#e8e8e8" stroke-width="0.5"/><circle cx="2.8" cy="2.3" r="1.15" fill="#cfcfcf"/><circle cx="8.8" cy="2.3" r="1.15" fill="#cfcfcf"/><circle cx="2.8" cy="8.3" r="1.15" fill="#cfcfcf"/><path d="M14 11V14H11Z" fill="#6fcdb4"/></svg>
<svg style="left:454.50px;top:322.00px;" width="10" height="10" viewBox="0 0 10 10"><path d="M0.7 0.7L9.3 9.3M9.3 0.7L0.7 9.3" stroke="#d8d8d8" stroke-width="1.1"/></svg>
<div style="left:8.80px;top:340.00px;width:464.70px;height:21.50px;background:#4b4b4b;border-radius:3px;"></div>
<svg style="left:14.50px;top:346.30px;" width="10" height="10" viewBox="0 0 10 10"><circle cx="4.7" cy="4.7" r="3.9" fill="none" stroke="#7d7d7d" stroke-width="1.1"/></svg>
<span class="t" style="left:30.00px;top:343.74px;font-size:12px;line-height:16px;color:#e2e2e2;letter-spacing:-0.048px;">Blend</span>
<div style="left:186.00px;top:349.80px;width:185.00px;height:3.00px;background:#575757;border-radius:1.5px;"></div>
<svg style="left:176.50px;top:345.70px;" width="11" height="11" viewBox="0 0 11 11"><circle cx="5.5" cy="5.5" r="5.2" fill="#6fcdb4"/><circle cx="5.5" cy="5.5" r="2" fill="#4fa890"/></svg>
<div style="left:377.00px;top:343.00px;width:94.00px;height:16.00px;background:#2c2c2c;border-radius:2px;"></div>
<div style="left:459.50px;top:343.00px;width:11.50px;height:16.00px;background:#363636;border-radius:0 2px 2px 0;"></div>
<span class="t" style="left:380.50px;top:343.93px;font-size:11.5px;line-height:15px;color:#7a7a7a;">%</span>
<span class="t" style="left:394.00px;top:343.64px;font-size:12px;line-height:16px;color:#e2e2e2;letter-spacing:-0.091px;">0.0</span>
<svg style="left:448.80px;top:346.80px;" width="9" height="9" viewBox="0 0 9 9"><path d="M4.5 0.3L8.7 4.5L4.5 8.7L0.3 4.5Z" fill="#2ecc71"/></svg>
<svg style="left:461.50px;top:347.20px;" width="7" height="8" viewBox="0 0 7 8"><path d="M0 0.5H3L6.5 4L3 7.5H0Z" fill="#8a8a8a"/></svg>
<svg style="left:14.50px;top:368.30px;" width="10" height="10" viewBox="0 0 10 10"><circle cx="4.7" cy="4.7" r="3.9" fill="none" stroke="#7d7d7d" stroke-width="1.1"/></svg>
<span class="t" style="left:30.00px;top:365.74px;font-size:12px;line-height:16px;color:#e2e2e2;letter-spacing:-0.129px;">Destination Shape</span>
<svg style="left:155.00px;top:369.80px;" width="6" height="8" viewBox="0 0 6 8"><path d="M6 0.5H3.6L0.3 4L3.6 7.5H6Z" fill="#e0c369"/></svg>
<div style="left:163.50px;top:367.50px;width:10.50px;height:13.50px;background:#3f3f3f;border-radius:2px;"></div>
<svg style="left:166.00px;top:369.80px;" width="6" height="8" viewBox="0 0 6 8"><path d="M0 0.5H2.4L5.7 4L2.4 7.5H0Z" fill="#8a8a8a"/></svg>
<div style="left:177.00px;top:367.00px;width:294.00px;height:15.50px;background:#333;border-radius:2px;"></div>
<span class="t" style="left:181.50px;top:366.43px;font-size:11.5px;line-height:15px;color:#5c5c5c;">C</span>
<span class="t" style="left:194.00px;top:365.74px;font-size:12px;line-height:16px;color:#d9c46f;letter-spacing:0.023px;">RingDuplicator</span>
<svg style="left:14.50px;top:390.30px;" width="10" height="10" viewBox="0 0 10 10"><circle cx="4.7" cy="4.7" r="3.9" fill="none" stroke="#7d7d7d" stroke-width="1.1"/></svg>
<span class="t" style="left:30.00px;top:387.74px;font-size:12px;line-height:16px;color:#e2e2e2;letter-spacing:-0.227px;">Level Mode</span>
<div style="left:177.50px;top:388.00px;width:192.50px;height:14.50px;background:#4a4a4a;border-radius:2px;box-shadow:0 0 0 1px #525252 inset;"></div>
<span class="t" style="left:180.00px;top:387.74px;font-size:12px;line-height:16px;color:#e2e2e2;letter-spacing:-0.118px;">Text (Lines)/ Duplicator</span>
<svg style="left:358.00px;top:392.80px;" width="9" height="6" viewBox="0 0 9 6"><path d="M0.7 0.7L4.5 4.5L8.3 0.7" fill="none" stroke="#a8a8a8" stroke-width="1.1"/></svg>
<svg style="left:14.50px;top:412.30px;" width="10" height="10" viewBox="0 0 10 10"><circle cx="4.7" cy="4.7" r="3.9" fill="none" stroke="#7d7d7d" stroke-width="1.1"/></svg>
<span class="t" style="left:30.00px;top:409.74px;font-size:12px;line-height:16px;color:#8c8c8c;letter-spacing:-0.306px;">Custom Level</span>
<div style="left:177.00px;top:409.00px;width:94.00px;height:15.50px;background:#2c2c2c;border-radius:2px;"></div>
<span class="t" style="left:182.00px;top:410.53px;font-size:11px;line-height:14px;color:#5a5a5a;">#</span>
<span class="t" style="left:195.00px;top:409.74px;font-size:12px;line-height:16px;color:#9a9a9a;">1</span>
<svg style="left:14.50px;top:434.30px;" width="10" height="10" viewBox="0 0 10 10"><circle cx="4.7" cy="4.7" r="3.9" fill="none" stroke="#7d7d7d" stroke-width="1.1"/></svg>
<span class="t" style="left:30.00px;top:431.54px;font-size:12px;line-height:16px;color:#e2e2e2;letter-spacing:-0.231px;">Use Global Positions</span>
<div style="left:177.00px;top:431.00px;width:16.00px;height:15.70px;background:#2b2b2b;border-radius:2.5px;"></div>
<svg style="left:14.50px;top:456.30px;" width="10" height="10" viewBox="0 0 10 10"><circle cx="4.7" cy="4.7" r="3.9" fill="none" stroke="#7d7d7d" stroke-width="1.1"/></svg>
<span class="t" style="left:30.00px;top:453.54px;font-size:12px;line-height:16px;color:#e2e2e2;letter-spacing:0.065px;">Time Offset</span>
<div style="left:177.00px;top:453.00px;width:94.00px;height:15.50px;background:#2c2c2c;border-radius:2px;"></div>
<span class="t" style="left:182.00px;top:454.53px;font-size:11px;line-height:14px;color:#5a5a5a;">#</span>
<span class="t" style="left:194.00px;top:453.54px;font-size:12px;line-height:16px;color:#e2e2e2;letter-spacing:-0.091px;">0.0</span>
<div style="left:474.30px;top:313.00px;width:13.70px;height:712.80px;background:#3a3a3a;"></div>
<div style="left:476.20px;top:311.80px;width:9.60px;height:711.10px;background:#4d4d4d;border-radius:4.8px;"></div>
<div style="left:494.00px;top:85.00px;width:30.00px;height:535.00px;background:#454545;"></div>
<div style="left:494.00px;top:85.00px;width:30.00px;height:9.70px;background:#3c3c3c;"></div>
<div style="left:504.00px;top:89.30px;width:1.50px;height:1.50px;background:#8f8f8f;"></div>
<div style="left:508.50px;top:89.30px;width:1.50px;height:1.50px;background:#8f8f8f;"></div>
<div style="left:513.00px;top:89.30px;width:1.50px;height:1.50px;background:#8f8f8f;"></div>
<div style="left:495.00px;top:96.00px;width:28.00px;height:28.00px;background:#121212;border-radius:3.5px;"></div>
<svg width="0" height="0" style="left:0;top:0;"><defs><linearGradient id="tg" x1="0" y1="0" x2="0" y2="1"><stop offset="0" stop-color="#f4f4f4"/><stop offset="1" stop-color="#c4c4c4"/></linearGradient></defs></svg>
<svg style="left:498.00px;top:98.50px;" width="22" height="22" viewBox="0 0 22 22"><path d="M5.5 2.5L17 12.5L11.8 13L14.5 18.8L12 19.8L9.5 14L5.5 17.5Z" fill="none" stroke="#2ecc71" stroke-width="1.3" stroke-linejoin="round"/></svg>
<svg style="left:498.00px;top:129.00px;" width="22" height="22" viewBox="0 0 22 22"><path d="M6 1.2L20.5 11.2L13 13L6 21Z" fill="url(#tg)"/></svg>
<svg style="left:498.00px;top:159.00px;" width="22" height="22" viewBox="0 0 22 22"><path d="M4 3.5L13 7L17.5 14.5L14 18L6.5 13.5Z" fill="url(#tg)"/><path d="M4 3.5L11.5 11" stroke="#454545" stroke-width="1"/><circle cx="11.5" cy="11" r="1.3" fill="#454545"/><path d="M15 19L18.5 15.5L19.8 16.8L16.3 20.3Z" fill="url(#tg)"/></svg>
<svg style="left:498.00px;top:189.00px;" width="22" height="22" viewBox="0 0 22 22"><path d="M16.2 3.6L18.4 5.8L6.6 17.6L4.4 15.4Z" fill="url(#tg)"/><path d="M3.6 16.4L5.6 18.4L2.2 19.8Z" fill="url(#tg)"/><path d="M17 2.8L18 1.8Q18.8 1.2 19.6 2T20.2 4L19.2 5Z" fill="url(#tg)"/></svg>
<svg style="left:499.00px;top:221.50px;" width="20" height="14" viewBox="0 0 20 14"><rect x="0" y="3.2" width="12.5" height="10" rx="1.2" fill="#dedede"/><path d="M13.5 6.5L20 3.5V13L13.5 10Z" fill="#dedede"/><rect x="2.5" y="0.5" width="6.5" height="1.6" fill="#dedede"/><circle cx="3" cy="6.2" r="1.1" fill="#454545"/></svg>
<svg style="left:498.00px;top:249.00px;" width="22" height="22" viewBox="0 0 22 22"><path d="M3 19.5L19 3" stroke="url(#tg)" stroke-width="1.2"/></svg>
<svg style="left:498.00px;top:279.00px;" width="22" height="22" viewBox="0 0 22 22"><path d="M3.8 3.2H18V6.2H12.7V18.6H9.1V6.2H3.8Z" fill="url(#tg)"/></svg>
<svg style="left:498.00px;top:309.00px;" width="22" height="22" viewBox="0 0 22 22"><path d="M3 2.5L11.5 8.5L6.5 9.5L3 14Z" fill="url(#tg)"/><path d="M12 4L18 3L19.5 18.5H3.5L4.5 14" fill="none" stroke="url(#tg)" stroke-width="1" stroke-dasharray="2.5 2"/><rect x="17" y="2" width="2" height="2" fill="url(#tg)"/><rect x="18.5" y="17.5" width="2" height="2" fill="url(#tg)"/><rect x="2.5" y="17.5" width="2" height="2" fill="url(#tg)"/></svg>
<svg style="left:498.00px;top:339.00px;" width="22" height="22" viewBox="0 0 22 22"><rect x="4" y="4.5" width="14" height="14" fill="url(#tg)"/></svg>
<svg style="left:498.00px;top:369.00px;" width="22" height="22" viewBox="0 0 22 22"><circle cx="11" cy="11" r="8" fill="url(#tg)"/></svg>
<svg style="left:498.00px;top:398.00px;" width="22" height="22" viewBox="0 0 22 22"><path d="M11 2.5L19.5 8.8L16.3 18.8H5.7L2.5 8.8Z" fill="url(#tg)"/></svg>
<svg style="left:498.00px;top:428.00px;" width="22" height="22" viewBox="0 0 22 22"><polygon points="11.00,2.10 13.35,8.56 20.23,8.80 14.80,13.04 16.70,19.65 11.00,15.80 5.30,19.65 7.20,13.04 1.77,8.80 8.65,8.56" fill="url(#tg)"/></svg>
<svg style="left:498.00px;top:459.00px;" width="22" height="22" viewBox="0 0 22 22"><path d="M17.5 8.2A6.8 6.8 0 1 0 10.5 18" fill="none" stroke="url(#tg)" stroke-width="3.2"/></svg>
<svg style="left:498.00px;top:489.00px;" width="22" height="22" viewBox="0 0 22 22"><path d="M11 1.5Q12.3 9.7 20.5 11Q12.3 12.3 11 20.5Q9.7 12.3 1.5 11Q9.7 9.7 11 1.5Z" fill="url(#tg)"/></svg>
<svg style="left:498.00px;top:519.00px;" width="22" height="22" viewBox="0 0 22 22"><rect x="9.2" y="1.8" width="3.6" height="5" fill="url(#tg)" transform="rotate(0 11 11)"/><rect x="9.2" y="1.8" width="3.6" height="5" fill="url(#tg)" transform="rotate(45 11 11)"/><rect x="9.2" y="1.8" width="3.6" height="5" fill="url(#tg)" transform="rotate(90 11 11)"/><rect x="9.2" y="1.8" width="3.6" height="5" fill="url(#tg)" transform="rotate(135 11 11)"/><rect x="9.2" y="1.8" width="3.6" height="5" fill="url(#tg)" transform="rotate(180 11 11)"/><rect x="9.2" y="1.8" width="3.6" height="5" fill="url(#tg)" transform="rotate(225 11 11)"/><rect x="9.2" y="1.8" width="3.6" height="5" fill="url(#tg)" transform="rotate(270 11 11)"/><rect x="9.2" y="1.8" width="3.6" height="5" fill="url(#tg)" transform="rotate(315 11 11)"/><circle cx="11" cy="11" r="5.2" fill="none" stroke="url(#tg)" stroke-width="3.2"/></svg>
<svg style="left:498.00px;top:549.00px;" width="22" height="22" viewBox="0 0 22 22"><path d="M-0.3 11L7 5V9.3H15V5L22.3 11L15 17V12.7H7V17Z" fill="url(#tg)"/></svg>
<svg style="left:498.00px;top:599.00px;" width="22" height="22" viewBox="0 0 22 22"><path d="M5 6L10.5 11L5 16M11.5 6L17 11L11.5 16" fill="none" stroke="#c8c8c8" stroke-width="1.2"/></svg>
<div style="left:530.00px;top:85.00px;width:96.00px;height:22.50px;background:#454545;border-radius:4px 4px 0 0;"></div>
<span class="t" style="left:535.00px;top:89.44px;font-size:12px;line-height:16px;color:#e2e2e2;letter-spacing:0.085px;">duplicator blend</span>
<div style="left:530.00px;top:107.00px;width:1057.00px;height:513.00px;background:#454545;"></div>
<div style="left:550.00px;top:127.00px;width:1037.00px;height:471.00px;background:#000;"></div>
<div style="left:681.00px;top:155.20px;width:756.40px;height:425.80px;background:#1b1b1b;"></div>
<svg style="left:0.00px;top:0.00px;pointer-events:none;" width="1920" height="1030" viewBox="0 0 1920 1030"><rect x="551.10" y="123" width="1" height="4" fill="#808080"/><rect x="562.91" y="123" width="1" height="4" fill="#808080"/><rect x="574.73" y="123" width="1" height="4" fill="#808080"/><rect x="586.54" y="119.2" width="1" height="7.8" fill="#8f8f8f"/><rect x="598.35" y="123" width="1" height="4" fill="#808080"/><rect x="610.17" y="123" width="1" height="4" fill="#808080"/><rect x="621.98" y="123" width="1" height="4" fill="#808080"/><rect x="633.80" y="123" width="1" height="4" fill="#808080"/><rect x="645.61" y="119.2" width="1" height="7.8" fill="#8f8f8f"/><rect x="657.42" y="123" width="1" height="4" fill="#808080"/><rect x="669.24" y="123" width="1" height="4" fill="#808080"/><rect x="681.05" y="123" width="1" height="4" fill="#808080"/><rect x="692.87" y="123" width="1" height="4" fill="#808080"/><rect x="704.68" y="119.2" width="1" height="7.8" fill="#8f8f8f"/><rect x="716.49" y="123" width="1" height="4" fill="#808080"/><rect x="728.31" y="123" width="1" height="4" fill="#808080"/><rect x="740.12" y="123" width="1" height="4" fill="#808080"/><rect x="751.94" y="123" width="1" height="4" fill="#808080"/><rect x="763.75" y="119.2" width="1" height="7.8" fill="#8f8f8f"/><rect x="775.56" y="123" width="1" height="4" fill="#808080"/><rect x="787.38" y="123" width="1" height="4" fill="#808080"/><rect x="799.19" y="123" width="1" height="4" fill="#808080"/><rect x="811.01" y="123" width="1" height="4" fill="#808080"/><rect x="822.82" y="119.2" width="1" height="7.8" fill="#8f8f8f"/><rect x="834.63" y="123" width="1" height="4" fill="#808080"/><rect x="846.45" y="123" width="1" height="4" fill="#808080"/><rect x="858.26" y="123" width="1" height="4" fill="#808080"/><rect x="870.08" y="123" width="1" height="4" fill="#808080"/><rect x="881.89" y="119.2" width="1" height="7.8" fill="#8f8f8f"/><rect x="893.70" y="123" width="1" height="4" fill="#808080"/><rect x="905.52" y="123" width="1" height="4" fill="#808080"/><rect x="917.33" y="123" width="1" height="4" fill="#808080"/><rect x="929.15" y="123" width="1" height="4" fill="#808080"/><rect x="940.96" y="119.2" width="1" height="7.8" fill="#8f8f8f"/><rect x="952.77" y="123" width="1" height="4" fill="#808080"/><rect x="964.59" y="123" width="1" height="4" fill="#808080"/><rect x="976.40" y="123" width="1" height="4" fill="#808080"/><rect x="988.22" y="123" width="1" height="4" fill="#808080"/><rect x="1000.03" y="119.2" width="1" height="7.8" fill="#8f8f8f"/><rect x="1011.84" y="123" width="1" height="4" fill="#808080"/><rect x="1023.66" y="123" width="1" height="4" fill="#808080"/><rect x="1035.47" y="123" width="1" height="4" fill="#808080"/><rect x="1047.29" y="123" width="1" height="4" fill="#808080"/><rect x="1059.10" y="119.2" width="1" height="7.8" fill="#8f8f8f"/><rect x="1070.91" y="123" width="1" height="4" fill="#808080"/><rect x="1082.73" y="123" width="1" height="4" fill="#808080"/><rect x="1094.54" y="123" width="1" height="4" fill="#808080"/><rect x="1106.36" y="123" width="1" height="4" fill="#808080"/><rect x="1118.17" y="119.2" width="1" height="7.8" fill="#8f8f8f"/><rect x="1129.98" y="123" width="1" height="4" fill="#808080"/><rect x="1141.80" y="123" width="1" height="4" fill="#808080"/><rect x="1153.61" y="123" width="1" height="4" fill="#808080"/><rect x="1165.43" y="123" width="1" height="4" fill="#808080"/><rect x="1177.24" y="119.2" width="1" height="7.8" fill="#8f8f8f"/><rect x="1189.05" y="123" width="1" height="4" fill="#808080"/><rect x="1200.87" y="123" width="1" height="4" fill="#808080"/><rect x="1212.68" y="123" width="1" height="4" fill="#808080"/><rect x="1224.50" y="123" width="1" height="4" fill="#808080"/><rect x="1236.31" y="119.2" width="1" height="7.8" fill="#8f8f8f"/><rect x="1248.12" y="123" width="1" height="4" fill="#808080"/><rect x="1259.94" y="123" width="1" height="4" fill="#808080"/><rect x="1271.75" y="123" width="1" height="4" fill="#808080"/><rect x="1283.57" y="123" width="1" height="4" fill="#808080"/><rect x="1295.38" y="119.2" width="1" height="7.8" fill="#8f8f8f"/><rect x="1307.19" y="123" width="1" height="4" fill="#808080"/><rect x="1319.01" y="123" width="1" height="4" fill="#808080"/><rect x="1330.82" y="123" width="1" height="4" fill="#808080"/><rect x="1342.64" y="123" width="1" height="4" fill="#808080"/><rect x="1354.45" y="119.2" width="1" height="7.8" fill="#8f8f8f"/><rect x="1366.26" y="123" width="1" height="4" fill="#808080"/><rect x="1378.08" y="123" width="1" height="4" fill="#808080"/><rect x="1389.89" y="123" width="1" height="4" fill="#808080"/><rect x="1401.71" y="123" width="1" height="4" fill="#808080"/><rect x="1413.52" y="119.2" width="1" height="7.8" fill="#8f8f8f"/><rect x="1425.33" y="123" width="1" height="4" fill="#808080"/><rect x="1437.15" y="123" width="1" height="4" fill="#808080"/><rect x="1448.96" y="123" width="1" height="4" fill="#808080"/><rect x="1460.78" y="123" width="1" height="4" fill="#808080"/><rect x="1472.59" y="119.2" width="1" height="7.8" fill="#8f8f8f"/><rect x="1484.40" y="123" width="1" height="4" fill="#808080"/><rect x="1496.22" y="123" width="1" height="4" fill="#808080"/><rect x="1508.03" y="123" width="1" height="4" fill="#808080"/><rect x="1519.85" y="123" width="1" height="4" fill="#808080"/><rect x="1531.66" y="119.2" width="1" height="7.8" fill="#8f8f8f"/><rect x="1543.47" y="123" width="1" height="4" fill="#808080"/><rect x="1555.29" y="123" width="1" height="4" fill="#808080"/><rect x="1567.10" y="123" width="1" height="4" fill="#808080"/><rect x="1578.92" y="123" width="1" height="4" fill="#808080"/><rect x="542.2" y="130.86" width="7.8" height="1" fill="#8f8f8f"/><rect x="546" y="142.69" width="4" height="1" fill="#808080"/><rect x="546" y="154.52" width="4" height="1" fill="#808080"/><rect x="546" y="166.36" width="4" height="1" fill="#808080"/><rect x="546" y="178.19" width="4" height="1" fill="#808080"/><rect x="542.2" y="190.02" width="7.8" height="1" fill="#8f8f8f"/><rect x="546" y="201.85" width="4" height="1" fill="#808080"/><rect x="546" y="213.68" width="4" height="1" fill="#808080"/><rect x="546" y="225.52" width="4" height="1" fill="#808080"/><rect x="546" y="237.35" width="4" height="1" fill="#808080"/><rect x="542.2" y="249.18" width="7.8" height="1" fill="#8f8f8f"/><rect x="546" y="261.01" width="4" height="1" fill="#808080"/><rect x="546" y="272.84" width="4" height="1" fill="#808080"/><rect x="546" y="284.68" width="4" height="1" fill="#808080"/><rect x="546" y="296.51" width="4" height="1" fill="#808080"/><rect x="542.2" y="308.34" width="7.8" height="1" fill="#8f8f8f"/><rect x="546" y="320.17" width="4" height="1" fill="#808080"/><rect x="546" y="332.00" width="4" height="1" fill="#808080"/><rect x="546" y="343.84" width="4" height="1" fill="#808080"/><rect x="546" y="355.67" width="4" height="1" fill="#808080"/><rect x="542.2" y="367.50" width="7.8" height="1" fill="#8f8f8f"/><rect x="546" y="379.33" width="4" height="1" fill="#808080"/><rect x="546" y="391.16" width="4" height="1" fill="#808080"/><rect x="546" y="403.00" width="4" height="1" fill="#808080"/><rect x="546" y="414.83" width="4" height="1" fill="#808080"/><rect x="542.2" y="426.66" width="7.8" height="1" fill="#8f8f8f"/><rect x="546" y="438.49" width="4" height="1" fill="#808080"/><rect x="546" y="450.32" width="4" height="1" fill="#808080"/><rect x="546" y="462.16" width="4" height="1" fill="#808080"/><rect x="546" y="473.99" width="4" height="1" fill="#808080"/><rect x="542.2" y="485.82" width="7.8" height="1" fill="#8f8f8f"/><rect x="546" y="497.65" width="4" height="1" fill="#808080"/><rect x="546" y="509.48" width="4" height="1" fill="#808080"/><rect x="546" y="521.32" width="4" height="1" fill="#808080"/><rect x="546" y="533.15" width="4" height="1" fill="#808080"/><rect x="542.2" y="544.98" width="7.8" height="1" fill="#8f8f8f"/><rect x="546" y="556.81" width="4" height="1" fill="#808080"/><rect x="546" y="568.64" width="4" height="1" fill="#808080"/><rect x="546" y="580.48" width="4" height="1" fill="#808080"/><rect x="546" y="592.31" width="4" height="1" fill="#808080"/></svg>
<span class="t" style="left:574.11px;top:107.42px;font-size:10.5px;line-height:14px;color:#b8b8b8;">-1200</span>
<span class="t" style="left:633.18px;top:107.42px;font-size:10.5px;line-height:14px;color:#b8b8b8;">-1050</span>
<span class="t" style="left:695.17px;top:107.42px;font-size:10.5px;line-height:14px;color:#b8b8b8;">-900</span>
<span class="t" style="left:754.24px;top:107.42px;font-size:10.5px;line-height:14px;color:#b8b8b8;">-750</span>
<span class="t" style="left:813.31px;top:107.42px;font-size:10.5px;line-height:14px;color:#b8b8b8;">-600</span>
<span class="t" style="left:872.38px;top:107.42px;font-size:10.5px;line-height:14px;color:#b8b8b8;">-450</span>
<span class="t" style="left:931.45px;top:107.42px;font-size:10.5px;line-height:14px;color:#b8b8b8;">-300</span>
<span class="t" style="left:990.52px;top:107.42px;font-size:10.5px;line-height:14px;color:#b8b8b8;">-150</span>
<span class="t" style="left:1057.18px;top:107.42px;font-size:10.5px;line-height:14px;color:#b8b8b8;">0</span>
<span class="t" style="left:1110.41px;top:107.42px;font-size:10.5px;line-height:14px;color:#b8b8b8;">150</span>
<span class="t" style="left:1169.48px;top:107.42px;font-size:10.5px;line-height:14px;color:#b8b8b8;">300</span>
<span class="t" style="left:1228.55px;top:107.42px;font-size:10.5px;line-height:14px;color:#b8b8b8;">450</span>
<span class="t" style="left:1287.62px;top:107.42px;font-size:10.5px;line-height:14px;color:#b8b8b8;">600</span>
<span class="t" style="left:1346.69px;top:107.42px;font-size:10.5px;line-height:14px;color:#b8b8b8;">750</span>
<span class="t" style="left:1405.76px;top:107.42px;font-size:10.5px;line-height:14px;color:#b8b8b8;">900</span>
<span class="t" style="left:1461.91px;top:107.42px;font-size:10.5px;line-height:14px;color:#b8b8b8;">1050</span>
<span class="t" style="left:1520.98px;top:107.42px;font-size:10.5px;line-height:14px;color:#b8b8b8;">1200</span>
<span class="t" style="left:535.50px;top:109.92px;font-size:10.5px;line-height:14px;color:#b8b8b8;">px</span>
<span class="t" style="left:530.50px;top:139.62px;font-size:10.5px;line-height:14px;color:#b8b8b8;transform:rotate(-90deg);transform-origin:0 0;">600</span>
<span class="t" style="left:530.50px;top:198.78px;font-size:10.5px;line-height:14px;color:#b8b8b8;transform:rotate(-90deg);transform-origin:0 0;">450</span>
<span class="t" style="left:530.50px;top:257.94px;font-size:10.5px;line-height:14px;color:#b8b8b8;transform:rotate(-90deg);transform-origin:0 0;">300</span>
<span class="t" style="left:530.50px;top:317.10px;font-size:10.5px;line-height:14px;color:#b8b8b8;transform:rotate(-90deg);transform-origin:0 0;">150</span>
<span class="t" style="left:530.50px;top:370.42px;font-size:10.5px;line-height:14px;color:#b8b8b8;transform:rotate(-90deg);transform-origin:0 0;">0</span>
<span class="t" style="left:530.50px;top:437.17px;font-size:10.5px;line-height:14px;color:#b8b8b8;transform:rotate(-90deg);transform-origin:0 0;">-150</span>
<span class="t" style="left:530.50px;top:496.33px;font-size:10.5px;line-height:14px;color:#b8b8b8;transform:rotate(-90deg);transform-origin:0 0;">-300</span>
<span class="t" style="left:530.50px;top:555.49px;font-size:10.5px;line-height:14px;color:#b8b8b8;transform:rotate(-90deg);transform-origin:0 0;">-450</span>
<svg style="left:0.00px;top:0.00px;pointer-events:none;" width="1920" height="1030" viewBox="0 0 1920 1030"><circle cx="1071.23" cy="250.65" r="3.75" fill="#6c6c6c"/><circle cx="1095.36" cy="255.78" r="3.75" fill="#6c6c6c"/><circle cx="1117.90" cy="265.81" r="3.75" fill="#6c6c6c"/><circle cx="1137.86" cy="280.31" r="3.75" fill="#6c6c6c"/><circle cx="1154.36" cy="298.64" r="3.75" fill="#6c6c6c"/><circle cx="1166.70" cy="320.01" r="3.75" fill="#6c6c6c"/><circle cx="1174.32" cy="343.47" r="3.75" fill="#6c6c6c"/><circle cx="1176.90" cy="368.00" r="3.75" fill="#6c6c6c"/><circle cx="1174.32" cy="392.53" r="3.75" fill="#6c6c6c"/><circle cx="1166.70" cy="415.99" r="3.75" fill="#6c6c6c"/><circle cx="1154.36" cy="437.36" r="3.75" fill="#6c6c6c"/><circle cx="1137.86" cy="455.69" r="3.75" fill="#6c6c6c"/><circle cx="1117.90" cy="470.19" r="3.75" fill="#6c6c6c"/><circle cx="1095.36" cy="480.22" r="3.75" fill="#6c6c6c"/><circle cx="1071.23" cy="485.35" r="3.75" fill="#6c6c6c"/><circle cx="1046.57" cy="485.35" r="3.75" fill="#6c6c6c"/><circle cx="1022.44" cy="480.22" r="3.75" fill="#6c6c6c"/><circle cx="999.90" cy="470.19" r="3.75" fill="#6c6c6c"/><circle cx="979.94" cy="455.69" r="3.75" fill="#6c6c6c"/><circle cx="963.44" cy="437.36" r="3.75" fill="#6c6c6c"/><circle cx="951.10" cy="415.99" r="3.75" fill="#6c6c6c"/><circle cx="943.48" cy="392.53" r="3.75" fill="#6c6c6c"/><circle cx="940.90" cy="368.00" r="3.75" fill="#6c6c6c"/><circle cx="943.48" cy="343.47" r="3.75" fill="#6c6c6c"/><circle cx="951.10" cy="320.01" r="3.75" fill="#6c6c6c"/><circle cx="963.44" cy="298.64" r="3.75" fill="#6c6c6c"/><circle cx="979.94" cy="280.31" r="3.75" fill="#6c6c6c"/><circle cx="999.90" cy="265.81" r="3.75" fill="#6c6c6c"/><circle cx="1022.44" cy="255.78" r="3.75" fill="#6c6c6c"/><circle cx="1046.57" cy="250.65" r="3.75" fill="#6c6c6c"/></svg>
<span class="t" style="left:570.00px;top:499.44px;font-size:12px;line-height:16px;color:#ececec;letter-spacing:-0.604px;">Hold S</span>
<span class="t" style="left:606.00px;top:499.44px;font-size:12px;line-height:16px;color:#444;letter-spacing:-0.114px;">Direct Layer Selection</span>
<span class="t" style="left:570.00px;top:513.49px;font-size:12px;line-height:16px;color:#ececec;letter-spacing:-1.007px;">Space</span>
<span class="t" style="left:603.00px;top:513.49px;font-size:12px;line-height:16px;color:#444;letter-spacing:-0.189px;">Play/ Stop</span>
<span class="t" style="left:570.00px;top:527.54px;font-size:12px;line-height:16px;color:#ececec;letter-spacing:-0.407px;">Space + click + drag</span>
<span class="t" style="left:674.00px;top:527.54px;font-size:12px;line-height:16px;color:#444;letter-spacing:-1.176px;">Pan</span>
<span class="t" style="left:570.00px;top:541.59px;font-size:12px;line-height:16px;color:#ececec;letter-spacing:-0.218px;">Alt + click + drag</span>
<span class="t" style="left:658.00px;top:541.59px;font-size:12px;line-height:16px;color:#444;letter-spacing:0.064px;">Move Pivot Point</span>
<span class="t" style="left:570.00px;top:555.64px;font-size:12px;line-height:16px;color:#ececec;letter-spacing:-0.253px;">Shift</span>
<span class="t" style="left:597.00px;top:555.64px;font-size:12px;line-height:16px;color:#444;letter-spacing:-0.458px;">Enable Snapping</span>
<span class="t" style="left:998.00px;top:575.44px;font-size:12px;line-height:16px;color:#ececec;letter-spacing:0.119px;">Viewport Quality: High</span>
<div style="left:535.00px;top:601.50px;width:78.00px;height:15.50px;background:#2c2c2c;border-radius:2.5px;"></div>
<span class="t" style="left:538.50px;top:601.64px;font-size:12px;line-height:16px;color:#e2e2e2;letter-spacing:-0.759px;">39%</span>
<svg style="left:600.00px;top:607.00px;" width="9" height="6" viewBox="0 0 9 6"><path d="M0.7 0.7L4.5 4.5L8.3 0.7" fill="none" stroke="#d0d0d0" stroke-width="1.1"/></svg>
<div style="left:866.30px;top:599.50px;width:99.40px;height:19.00px;background:#2c2c2c;border-radius:4px;box-shadow:0 0 0 1px #3a3a3a;"></div>
<div style="left:885.70px;top:599.50px;width:1.00px;height:19.00px;background:#3e3e3e;"></div>
<div style="left:905.60px;top:599.50px;width:1.00px;height:19.00px;background:#3e3e3e;"></div>
<div style="left:925.50px;top:599.50px;width:1.00px;height:19.00px;background:#3e3e3e;"></div>
<div style="left:945.40px;top:599.50px;width:1.00px;height:19.00px;background:#3e3e3e;"></div>
<div style="left:971.30px;top:599.50px;width:19.40px;height:19.00px;background:#2c2c2c;border-radius:4px;box-shadow:0 0 0 1px #3a3a3a;"></div>
<svg style="left:869.50px;top:603.50px;" width="13" height="11" viewBox="0 0 13 11"><rect x="0" y="0" width="2" height="11" fill="#dedede"/><path d="M11.5 0V11L3 5.5Z" fill="#dedede"/></svg>
<svg style="left:889.50px;top:603.50px;" width="13" height="11" viewBox="0 0 13 11"><path d="M7.5 0V11L0 5.5Z" fill="#dedede"/><rect x="9.8" y="0" width="2" height="11" fill="#dedede"/></svg>
<svg style="left:911.00px;top:603.50px;" width="10" height="11" viewBox="0 0 10 11"><path d="M0.5 0L9.5 5.5L0.5 11Z" fill="#dedede"/></svg>
<svg style="left:929.50px;top:603.50px;" width="13" height="11" viewBox="0 0 13 11"><rect x="0.5" y="0" width="2" height="11" fill="#dedede"/><path d="M4.8 0L12.5 5.5L4.8 11Z" fill="#dedede"/></svg>
<svg style="left:949.50px;top:603.50px;" width="13" height="11" viewBox="0 0 13 11"><path d="M1 0L9.5 5.5L1 11Z" fill="#dedede"/><rect x="10.3" y="0" width="2" height="11" fill="#dedede"/></svg>
<svg style="left:974.00px;top:602.50px;" width="14" height="12" viewBox="0 0 14 12"><path d="M6 3.5H1.5Q0.7 3.5 0.7 4.3V10.2Q0.7 11 1.5 11H12.2Q13 11 13 10.2V6" fill="none" stroke="#dedede" stroke-width="1.3"/><path d="M7.5 0.3L12.5 3.3L7.5 6.3Z" fill="#dedede"/></svg>
<div style="left:1232.30px;top:600.70px;width:36.70px;height:17.50px;background:#2c2c2c;border-radius:3px;"></div>
<svg style="left:1234.00px;top:605.00px;" width="14" height="9" viewBox="0 0 14 9"><path d="M4.5 0.5H13.5V8.5H4.5L0.5 4.5Z" fill="#dedede"/><circle cx="4.6" cy="4.5" r="1.4" fill="#2c2c2c"/></svg>
<span class="t" style="left:1258.00px;top:601.74px;font-size:12px;line-height:16px;color:#c4c4c4;">0</span>
<div style="left:1272.00px;top:600.70px;width:31.50px;height:17.50px;background:#2a2a2a;border-radius:3.5px;box-shadow:0 0 0 1px #303030;"></div>
<div style="left:1290.60px;top:600.70px;width:12.90px;height:17.50px;background:#2c2c2c;border-radius:0 3.5px 3.5px 0;"></div>
<div style="left:1290.20px;top:600.70px;width:0.80px;height:17.50px;background:#363636;"></div>
<svg style="left:1294.30px;top:606.00px;" width="6" height="7" viewBox="0 0 6 7"><path d="M0.6 0.7L5 3.5L0.6 6.3Z" fill="none" stroke="#7c7c7c" stroke-width="1"/></svg>
<div style="left:1307.50px;top:600.70px;width:30.50px;height:17.50px;background:#404040;border-radius:3.5px;box-shadow:0 0 0 1px #303030;"></div>
<div style="left:1326.10px;top:600.70px;width:11.90px;height:17.50px;background:#2c2c2c;border-radius:0 3.5px 3.5px 0;"></div>
<div style="left:1325.70px;top:600.70px;width:0.80px;height:17.50px;background:#363636;"></div>
<svg style="left:1329.80px;top:606.00px;" width="6" height="7" viewBox="0 0 6 7"><path d="M0.6 0.7L5 3.5L0.6 6.3Z" fill="none" stroke="#7c7c7c" stroke-width="1"/></svg>
<div style="left:1342.50px;top:600.70px;width:31.00px;height:17.50px;background:#404040;border-radius:3.5px;box-shadow:0 0 0 1px #303030;"></div>
<div style="left:1361.10px;top:600.70px;width:12.40px;height:17.50px;background:#2c2c2c;border-radius:0 3.5px 3.5px 0;"></div>
<div style="left:1360.70px;top:600.70px;width:0.80px;height:17.50px;background:#363636;"></div>
<svg style="left:1364.80px;top:606.00px;" width="6" height="7" viewBox="0 0 6 7"><path d="M0.6 0.7L5 3.5L0.6 6.3Z" fill="none" stroke="#7c7c7c" stroke-width="1"/></svg>
<div style="left:1377.00px;top:600.70px;width:19.50px;height:17.50px;background:#2a2a2a;border-radius:3.5px;box-shadow:0 0 0 1px #303030;"></div>
<div style="left:1400.00px;top:600.70px;width:19.50px;height:17.50px;background:#404040;border-radius:3.5px;box-shadow:0 0 0 1px #303030;"></div>
<div style="left:1423.50px;top:600.70px;width:30.50px;height:17.50px;background:#404040;border-radius:3.5px;box-shadow:0 0 0 1px #303030;"></div>
<div style="left:1442.10px;top:600.70px;width:11.90px;height:17.50px;background:#2c2c2c;border-radius:0 3.5px 3.5px 0;"></div>
<div style="left:1441.70px;top:600.70px;width:0.80px;height:17.50px;background:#363636;"></div>
<svg style="left:1445.80px;top:606.00px;" width="6" height="7" viewBox="0 0 6 7"><path d="M0.6 0.7L5 3.5L0.6 6.3Z" fill="none" stroke="#7c7c7c" stroke-width="1"/></svg>
<div style="left:1458.00px;top:600.70px;width:31.00px;height:17.50px;background:#404040;border-radius:3.5px;box-shadow:0 0 0 1px #303030;"></div>
<div style="left:1476.60px;top:600.70px;width:12.40px;height:17.50px;background:#2c2c2c;border-radius:0 3.5px 3.5px 0;"></div>
<div style="left:1476.20px;top:600.70px;width:0.80px;height:17.50px;background:#363636;"></div>
<svg style="left:1480.30px;top:606.00px;" width="6" height="7" viewBox="0 0 6 7"><path d="M0.6 0.7L5 3.5L0.6 6.3Z" fill="none" stroke="#7c7c7c" stroke-width="1"/></svg>
<div style="left:1493.00px;top:600.70px;width:31.00px;height:17.50px;background:#404040;border-radius:3.5px;box-shadow:0 0 0 1px #303030;"></div>
<div style="left:1511.60px;top:600.70px;width:12.40px;height:17.50px;background:#2c2c2c;border-radius:0 3.5px 3.5px 0;"></div>
<div style="left:1511.20px;top:600.70px;width:0.80px;height:17.50px;background:#363636;"></div>
<svg style="left:1515.30px;top:606.00px;" width="6" height="7" viewBox="0 0 6 7"><path d="M0.6 0.7L5 3.5L0.6 6.3Z" fill="none" stroke="#7c7c7c" stroke-width="1"/></svg>
<div style="left:1528.00px;top:600.70px;width:31.00px;height:17.50px;background:#2a2a2a;border-radius:3.5px;box-shadow:0 0 0 1px #303030;"></div>
<div style="left:1546.60px;top:600.70px;width:12.40px;height:17.50px;background:#2c2c2c;border-radius:0 3.5px 3.5px 0;"></div>
<div style="left:1546.20px;top:600.70px;width:0.80px;height:17.50px;background:#363636;"></div>
<svg style="left:1550.30px;top:606.00px;" width="6" height="7" viewBox="0 0 6 7"><path d="M0.6 0.7L5 3.5L0.6 6.3Z" fill="none" stroke="#7c7c7c" stroke-width="1"/></svg>
<div style="left:1563.00px;top:600.70px;width:19.50px;height:17.50px;background:#2a2a2a;border-radius:3.5px;box-shadow:0 0 0 1px #303030;"></div>
<svg style="left:1275.00px;top:602.50px;" width="14" height="14" viewBox="0 0 14 14"><path d="M0.5 4.5H3.5L7.5 1V13L3.5 9.5H0.5Z" fill="#2ecc71"/><path d="M9 4.2Q10.6 7 9 9.8M10.8 2.5Q13.4 7 10.8 11.5" fill="none" stroke="#2ecc71" stroke-width="1.2"/></svg>
<svg style="left:1310.50px;top:603.00px;" width="13" height="13" viewBox="0 0 13 13"><g transform="rotate(135 6.5 6.5)"><path d="M2.4 1.5V6.2A4.1 4.1 0 0 0 10.6 6.2V1.5" fill="none" stroke="#dedede" stroke-width="2.3"/><path d="M0.8 2.2H4M9 2.2H12.2" stroke="#404040" stroke-width="0.7"/></g></svg>
<svg style="left:1345.50px;top:603.00px;" width="13" height="13" viewBox="0 0 13 13"><path d="M4 0V13M9 0V13M0 4H13M0 9H13" stroke="#dedede" stroke-width="1.2"/></svg>
<svg style="left:1380.50px;top:604.00px;" width="13" height="11" viewBox="0 0 13 11"><rect x="0" y="0" width="3.2" height="4.5" fill="#2ecc71"/><rect x="0" y="6" width="13" height="5" fill="#2ecc71"/><rect x="5.2" y="0.6" width="7.2" height="3.6" fill="none" stroke="#2ecc71" stroke-width="1.2"/></svg>
<svg style="left:1403.30px;top:605.00px;" width="14" height="9" viewBox="0 0 14 9"><path d="M0.3 0.3L4.8 4.5L0.3 8.7Z" fill="#dedede"/><path d="M4.5 0.6L8.3 4.5L4.5 8.4M8.5 0.6L12.3 4.5L8.5 8.4" fill="none" stroke="#dedede" stroke-width="1.5"/></svg>
<svg style="left:1426.50px;top:603.50px;" width="14" height="12" viewBox="0 0 14 12"><rect x="0.6" y="0.6" width="12.8" height="9" fill="none" stroke="#d8d8d8" stroke-width="1.2"/><rect x="0" y="9.2" width="14" height="2.3" fill="#d8d8d8"/></svg>
<svg style="left:1461.50px;top:603.50px;" width="13" height="12" viewBox="0 0 13 12"><rect x="0.5" y="0.5" width="7" height="5" fill="none" stroke="#bdbdbd" stroke-width="1"/><path d="M3 7.5H9.5V3M5.5 9.5H11.5V5.5M8 11.5H13.5V8" fill="none" stroke="#9d9d9d" stroke-width="1"/></svg>
<svg style="left:1495.50px;top:602.50px;" width="15" height="14" viewBox="0 0 15 14"><rect x="0" y="0" width="9" height="9" fill="#bdbdbd"/><rect x="5.5" y="5" width="8" height="8" fill="#2c2c2c" stroke="#dedede" stroke-width="1.1"/></svg>
<svg style="left:1531.00px;top:602.70px;" width="14" height="14" viewBox="0 0 14 14"><rect x="0" y="0" width="2.7" height="2.7" fill="#2ecc71"/><rect x="0" y="5.4" width="2.7" height="2.7" fill="#2ecc71"/><rect x="0" y="10.8" width="2.7" height="2.7" fill="#2ecc71"/><rect x="2.7" y="2.7" width="2.7" height="2.7" fill="#2ecc71"/><rect x="2.7" y="8.1" width="2.7" height="2.7" fill="#2ecc71"/><rect x="5.4" y="0" width="2.7" height="2.7" fill="#2ecc71"/><rect x="5.4" y="5.4" width="2.7" height="2.7" fill="#2ecc71"/><rect x="5.4" y="10.8" width="2.7" height="2.7" fill="#2ecc71"/><rect x="8.1" y="2.7" width="2.7" height="2.7" fill="#2ecc71"/><rect x="8.1" y="8.1" width="2.7" height="2.7" fill="#2ecc71"/><rect x="10.8" y="0" width="2.7" height="2.7" fill="#2ecc71"/><rect x="10.8" y="5.4" width="2.7" height="2.7" fill="#2ecc71"/><rect x="10.8" y="10.8" width="2.7" height="2.7" fill="#2ecc71"/></svg>
<svg style="left:1565.20px;top:601.60px;" width="15.2" height="15.2" viewBox="0 0 22 22"><rect x="9.2" y="1.8" width="3.6" height="5" fill="url(#tg)" transform="rotate(0 11 11)"/><rect x="9.2" y="1.8" width="3.6" height="5" fill="url(#tg)" transform="rotate(45 11 11)"/><rect x="9.2" y="1.8" width="3.6" height="5" fill="url(#tg)" transform="rotate(90 11 11)"/><rect x="9.2" y="1.8" width="3.6" height="5" fill="url(#tg)" transform="rotate(135 11 11)"/><rect x="9.2" y="1.8" width="3.6" height="5" fill="url(#tg)" transform="rotate(180 11 11)"/><rect x="9.2" y="1.8" width="3.6" height="5" fill="url(#tg)" transform="rotate(225 11 11)"/><rect x="9.2" y="1.8" width="3.6" height="5" fill="url(#tg)" transform="rotate(270 11 11)"/><rect x="9.2" y="1.8" width="3.6" height="5" fill="url(#tg)" transform="rotate(315 11 11)"/><circle cx="11" cy="11" r="5.2" fill="none" stroke="url(#tg)" stroke-width="3.2"/></svg>
<div style="left:1593.00px;top:85.00px;width:40.00px;height:22.50px;background:#454545;border-radius:4px 4px 0 0;"></div>
<span class="t" style="left:1598.30px;top:89.44px;font-size:12px;line-height:16px;color:#e2e2e2;letter-spacing:0.081px;">Color</span>
<div style="left:1634.00px;top:85.00px;width:69.00px;height:22.00px;background:#2a2a2a;border-radius:4px 4px 0 0;"></div>
<span class="t" style="left:1639.70px;top:89.44px;font-size:12px;line-height:16px;color:#e2e2e2;letter-spacing:-0.356px;">Add Layers</span>
<div style="left:1593.00px;top:107.00px;width:321.00px;height:417.00px;background:#454545;"></div>
<div style="left:1900.00px;top:107.00px;width:14.00px;height:417.00px;background:#424242;"></div>
<div style="left:1902.50px;top:110.00px;width:9.00px;height:365.50px;background:#575757;border-radius:5px;"></div>
<div style="left:1646px;top:119.5px;width:200px;height:200px;border-radius:50%;background:conic-gradient(from 90deg,#f00,#ec00ec,#00f,#00ecec,#0f0,#ecec00,#f00);-webkit-mask:radial-gradient(circle,transparent 74.2px,#000 75px,#000 99.5px,transparent 100.3px);mask:radial-gradient(circle,transparent 74.2px,#000 75px,#000 99.5px,transparent 100.3px);"></div>
<div style="left:1702.00px;top:176.00px;width:90.00px;height:90.00px;background:linear-gradient(to right,#000,rgba(0,0,0,0)),linear-gradient(to bottom,#fff,#f00);"></div>
<svg style="left:1730.00px;top:169.00px;" width="14" height="14" viewBox="0 0 14 14"><circle cx="7" cy="7" r="5.7" fill="none" stroke="#e8e8e8" stroke-width="1"/></svg>
<svg style="left:1826.00px;top:213.00px;" width="14" height="14" viewBox="0 0 14 14"><circle cx="7" cy="7" r="5.7" fill="none" stroke="#f2f2f2" stroke-width="1"/></svg>
<div style="left:1600.00px;top:333.00px;width:22.00px;height:21.70px;background:#646464;border-radius:3px;"></div>
<span class="t" style="left:1625.50px;top:336.64px;font-size:12px;line-height:16px;color:#e2e2e2;letter-spacing:-0.167px;">Dim Gray</span>
<div style="left:1871.00px;top:333.00px;width:22.00px;height:21.70px;background:#2a2a2a;border-radius:3.5px;box-shadow:0 0 0 1px #3a3a3a;"></div>
<svg style="left:1876.00px;top:338.00px;" width="12" height="12" viewBox="0 0 12 12"><path d="M9.2 0.8L11.2 2.8L9 5L9.8 5.8L8.8 6.8L5.2 3.2L6.2 2.2L7 3Z" fill="#cfcfcf"/><path d="M6.6 4.6L1.5 9.7L0.8 11.2L2.3 10.5L7.4 5.4" fill="none" stroke="#bdbdbd" stroke-width="1.1"/></svg>
<div style="left:1600.00px;top:360.50px;width:49.50px;height:17.00px;background:#4b4b4b;border-radius:2px;box-shadow:0 0 0 1px #5c5c5c inset;"></div>
<span class="t" style="left:1603.00px;top:361.64px;font-size:12px;line-height:16px;color:#e2e2e2;letter-spacing:-0.170px;">Hex</span>
<svg style="left:1637.00px;top:366.50px;" width="9" height="6" viewBox="0 0 9 6"><path d="M0.7 0.7L4.5 4.5L8.3 0.7" fill="none" stroke="#d0d0d0" stroke-width="1.1"/></svg>
<div style="left:1653.00px;top:358.50px;width:240.00px;height:21.50px;background:#242424;border-radius:2.5px;"></div>
<span class="t" style="left:1658.00px;top:362.43px;font-size:11px;line-height:14px;color:#555;">#</span>
<span class="t" style="left:1670.00px;top:361.64px;font-size:12px;line-height:16px;color:#e2e2e2;letter-spacing:0.191px;">646464</span>
<div style="left:1600.00px;top:390.00px;width:232.00px;height:4.30px;background:#dfdfdf;border-radius:2.2px;"></div>
<svg style="left:1828.50px;top:386.50px;" width="12" height="12" viewBox="0 0 12 12"><circle cx="6" cy="6" r="5.6" fill="#6fcdb4"/><circle cx="6" cy="6" r="2.1" fill="#4fa890"/></svg>
<div style="left:1849.00px;top:384.30px;width:44.00px;height:15.50px;background:#2a2a2a;border-radius:2.5px;"></div>
<span class="t" style="left:1853.00px;top:385.34px;font-size:12px;line-height:16px;color:#555;">A</span>
<span class="t" style="left:1866.00px;top:385.34px;font-size:12px;line-height:16px;color:#e2e2e2;letter-spacing:0.489px;">255</span>
<div style="left:1597.00px;top:406.00px;width:299.00px;height:22.00px;background:#1f1f1f;"></div>
<div style="left:1599.00px;top:408.00px;width:148.00px;height:20.00px;background:#454545;border-radius:4px 4px 0 0;"></div>
<div style="left:1747.50px;top:408.00px;width:146.50px;height:20.00px;background:#2a2a2a;border-radius:4px 4px 0 0;"></div>
<span class="t" style="left:1648.00px;top:410.14px;font-size:12px;line-height:16px;color:#e2e2e2;letter-spacing:-0.290px;">Swatches</span>
<span class="t" style="left:1793.00px;top:410.14px;font-size:12px;line-height:16px;color:#c4c4c4;letter-spacing:0.121px;">Generator</span>
<div style="left:1598.00px;top:431.00px;width:257.00px;height:17.70px;background:#595959;border-radius:3px;"></div>
<div style="left:1599.00px;top:432.00px;width:62.00px;height:15.70px;background:#2a2a2a;border-radius:2.5px;"></div>
<svg style="left:1605.00px;top:434.50px;" width="12" height="11" viewBox="0 0 12 11"><path d="M1 0V10.5M4 0V10.5M6.5 0.5L10 10.3" stroke="#2ecc71" stroke-width="1.7"/></svg>
<span class="t" style="left:1621.00px;top:432.64px;font-size:12px;line-height:16px;color:#e2e2e2;letter-spacing:0.053px;">Library</span>
<svg style="left:1670.50px;top:434.50px;" width="11" height="10" viewBox="0 0 11 10"><path d="M0.5 0H5.5V1.5H0.5Z M0 2.5H11V10H0Z" fill="#d4d4d4"/><path d="M2 5H9M2 7.5H9" stroke="#595959" stroke-width="1"/></svg>
<span class="t" style="left:1686.50px;top:432.64px;font-size:12px;line-height:16px;color:#e2e2e2;letter-spacing:0.025px;">Project</span>
<svg style="left:1737.50px;top:434.00px;" width="9" height="11" viewBox="0 0 9 11"><path d="M0.6 0.6H5.5L8.2 3.3V10.4H0.6Z" fill="none" stroke="#d4d4d4" stroke-width="1.1"/><path d="M5.3 0.6V3.5H8.2" fill="none" stroke="#d4d4d4" stroke-width="0.9"/></svg>
<span class="t" style="left:1752.00px;top:432.64px;font-size:12px;line-height:16px;color:#e2e2e2;letter-spacing:-0.757px;">Scene</span>
<svg style="left:1800.50px;top:434.50px;" width="11" height="11" viewBox="0 0 11 11"><path d="M3 0.6H8Q10.4 0.6 10.4 3V6L6 10.4H3Q0.6 10.4 0.6 8V3Q0.6 0.6 3 0.6Z" fill="none" stroke="#d4d4d4" stroke-width="1.1"/><path d="M10.2 6H8Q6 6 6 8V10.2" fill="none" stroke="#d4d4d4" stroke-width="1"/></svg>
<span class="t" style="left:1816.00px;top:432.64px;font-size:12px;line-height:16px;color:#e2e2e2;letter-spacing:-0.472px;">Labels</span>
<div style="left:1858.00px;top:431.00px;width:37.00px;height:17.70px;background:#595959;border-radius:3px;"></div>
<div style="left:1859.00px;top:432.00px;width:16.50px;height:15.70px;background:#242424;border-radius:2.5px;"></div>
<svg style="left:1862.50px;top:435.30px;" width="10" height="10" viewBox="0 0 10 10"><rect x="0" y="0" width="3.6" height="3.6" rx="0.6" fill="#2ecc71"/><rect x="0" y="5.6" width="3.6" height="3.6" rx="0.6" fill="#2ecc71"/><rect x="5.6" y="0" width="3.6" height="3.6" rx="0.6" fill="#2ecc71"/><rect x="5.6" y="5.6" width="3.6" height="3.6" rx="0.6" fill="#2ecc71"/></svg>
<svg style="left:1880.50px;top:435.50px;" width="11" height="9" viewBox="0 0 11 9"><path d="M0 1H11M0 4.5H11M0 8H11" stroke="#e0e0e0" stroke-width="1.1"/></svg>
<div style="left:1598.00px;top:452.00px;width:275.50px;height:17.00px;background:#4f4f4f;border-radius:2px;box-shadow:0 0 0 1px #5c5c5c inset;"></div>
<span class="t" style="left:1601.00px;top:454.34px;font-size:12px;line-height:16px;color:#e2e2e2;letter-spacing:-0.336px;">Simple</span>
<svg style="left:1861.00px;top:458.00px;" width="9" height="6" viewBox="0 0 9 6"><path d="M0.7 0.7L4.5 4.5L8.3 0.7" fill="none" stroke="#d0d0d0" stroke-width="1.1"/></svg>
<div style="left:1880.50px;top:460.20px;width:2.00px;height:2.00px;background:#dcdcdc;"></div>
<div style="left:1885.30px;top:460.20px;width:2.00px;height:2.00px;background:#dcdcdc;"></div>
<div style="left:1890.00px;top:460.20px;width:2.00px;height:2.00px;background:#dcdcdc;"></div>
<div style="left:1598.00px;top:469.00px;width:297.00px;height:55.00px;background:#242424;"></div>
<div style="left:1895.00px;top:469.00px;width:5.00px;height:55.00px;background:#3c3c3c;"></div>
<div style="left:1600.00px;top:472.00px;width:18.00px;height:18.00px;background:#0a72bd;border-radius:3.5px;"></div>
<div style="left:1622.00px;top:472.00px;width:18.00px;height:18.00px;background:#0a9ad9;border-radius:3.5px;"></div>
<div style="left:1644.00px;top:472.00px;width:18.00px;height:18.00px;background:#93c264;border-radius:3.5px;"></div>
<div style="left:1666.00px;top:472.00px;width:18.00px;height:18.00px;background:#f5e642;border-radius:3.5px;"></div>
<div style="left:1688.00px;top:472.00px;width:18.00px;height:18.00px;background:#f07605;border-radius:3.5px;"></div>
<div style="left:1593.00px;top:530.00px;width:38.00px;height:22.50px;background:#454545;border-radius:4px 4px 0 0;"></div>
<span class="t" style="left:1598.50px;top:534.44px;font-size:12px;line-height:16px;color:#e2e2e2;letter-spacing:0.079px;">Align</span>
<div style="left:1593.00px;top:552.00px;width:321.00px;height:68.00px;background:#454545;"></div>
<span class="t" style="left:1601.00px;top:563.94px;font-size:12px;line-height:16px;color:#e2e2e2;letter-spacing:0.080px;">Alignment</span>
<span class="t" style="left:1601.00px;top:592.14px;font-size:12px;line-height:16px;color:#e2e2e2;letter-spacing:0.361px;">Distribution</span>
<div style="left:1790.00px;top:562.50px;width:53.50px;height:17.00px;background:#242424;border-radius:3.5px;box-shadow:0 0 0 0.6px #5a5a5a;"></div>
<div style="left:1807.60px;top:562.50px;width:0.80px;height:17.00px;background:#3c3c3c;"></div>
<div style="left:1825.20px;top:562.50px;width:0.80px;height:17.00px;background:#3c3c3c;"></div>
<div style="left:1852.00px;top:562.50px;width:53.50px;height:17.00px;background:#242424;border-radius:3.5px;box-shadow:0 0 0 0.6px #5a5a5a;"></div>
<div style="left:1869.60px;top:562.50px;width:0.80px;height:17.00px;background:#3c3c3c;"></div>
<div style="left:1887.20px;top:562.50px;width:0.80px;height:17.00px;background:#3c3c3c;"></div>
<div style="left:1790.00px;top:590.30px;width:53.50px;height:17.00px;background:#242424;border-radius:3.5px;box-shadow:0 0 0 0.6px #5a5a5a;"></div>
<div style="left:1807.60px;top:590.30px;width:0.80px;height:17.00px;background:#3c3c3c;"></div>
<div style="left:1825.20px;top:590.30px;width:0.80px;height:17.00px;background:#3c3c3c;"></div>
<svg style="left:1790.50px;top:562.50px;" width="17" height="17" viewBox="0 0 17 17"><path d="M3 2.5V14.5" stroke="#e6e6e6" stroke-width="1.2"/><path d="M5 6H11M5 11H13.5" stroke="#e6e6e6" stroke-width="2"/></svg>
<svg style="left:1808.50px;top:562.50px;" width="17" height="17" viewBox="0 0 17 17"><path d="M8.5 2V15" stroke="#e6e6e6" stroke-width="1.2"/><path d="M4.5 6H12.5M2.5 11H14.5" stroke="#e6e6e6" stroke-width="2"/></svg>
<svg style="left:1826.50px;top:562.50px;" width="17" height="17" viewBox="0 0 17 17"><path d="M14 2.5V14.5" stroke="#e6e6e6" stroke-width="1.2"/><path d="M6 6H12M3.5 11H12" stroke="#e6e6e6" stroke-width="2"/></svg>
<svg style="left:1852.50px;top:562.50px;" width="17" height="17" viewBox="0 0 17 17"><path d="M2.5 3H14.5" stroke="#e6e6e6" stroke-width="1.2"/><path d="M6 5V14M11 5V10" stroke="#e6e6e6" stroke-width="2"/></svg>
<svg style="left:1870.50px;top:562.50px;" width="17" height="17" viewBox="0 0 17 17"><path d="M2 8.5H15" stroke="#e6e6e6" stroke-width="1.2"/><path d="M6 3V14M11 5V12" stroke="#e6e6e6" stroke-width="2"/></svg>
<svg style="left:1888.50px;top:562.50px;" width="17" height="17" viewBox="0 0 17 17"><path d="M2.5 14.5H14.5" stroke="#e6e6e6" stroke-width="1.2"/><path d="M6 8V12.5M11 3.5V12.5" stroke="#e6e6e6" stroke-width="2"/></svg>
<svg style="left:1790.50px;top:590.30px;" width="17" height="17" viewBox="0 0 17 17"><path d="M3 2.5V14.5M14 2.5V14.5" stroke="#e6e6e6" stroke-width="1.2"/><path d="M8.5 4V12.5" stroke="#e6e6e6" stroke-width="2.4"/></svg>
<svg style="left:1808.50px;top:590.30px;" width="17" height="17" viewBox="0 0 17 17"><path d="M2.5 3H14.5M2.5 14H14.5" stroke="#e6e6e6" stroke-width="1.2"/><path d="M4.5 8.5H12.5" stroke="#e6e6e6" stroke-width="2.4"/></svg>
<svg style="left:1826.50px;top:590.30px;" width="17" height="17" viewBox="0 0 17 17"><path d="M2.5 5V2.5H5M12 2.5H14.5V5M14.5 12V14.5H12M5 14.5H2.5V12" fill="none" stroke="#e6e6e6" stroke-width="1.1"/><path d="M5 9V12M8.5 7V10M12 5V8" stroke="#e6e6e6" stroke-width="2"/></svg>
<div style="left:494.00px;top:627.00px;width:89.00px;height:21.50px;background:#454545;border-radius:4px 4px 0 0;"></div>
<span class="t" style="left:499.00px;top:630.44px;font-size:12px;line-height:16px;color:#e2e2e2;letter-spacing:-0.186px;">Scene Window</span>
<div style="left:584.00px;top:627.00px;width:100.00px;height:21.50px;background:#2a2a2a;border-radius:4px 4px 0 0;"></div>
<span class="t" style="left:589.50px;top:630.44px;font-size:12px;line-height:16px;color:#e2e2e2;letter-spacing:-0.138px;">JavaScript Editor</span>
<div style="left:685.00px;top:627.00px;width:112.00px;height:21.50px;background:#2a2a2a;border-radius:4px 4px 0 0;"></div>
<span class="t" style="left:690.50px;top:630.44px;font-size:12px;line-height:16px;color:#e2e2e2;letter-spacing:-0.171px;">Dependency Graph</span>
<div style="left:494.00px;top:648.00px;width:1420.00px;height:1.20px;background:#2ecc71;"></div>
<div style="left:494.00px;top:649.20px;width:1420.00px;height:20.80px;background:#2a2a2a;"></div>
<span class="t" style="left:591.30px;top:652.44px;font-size:12px;line-height:16px;color:#a9a9a9;letter-spacing:-0.059px;">Composition 1</span>
<svg style="left:764.00px;top:656.00px;" width="8" height="8" viewBox="0 0 8 8"><path d="M0.6 0.6L7.4 7.4M7.4 0.6L0.6 7.4" stroke="#a8a8a8" stroke-width="1"/></svg>
<div style="left:781.00px;top:654.00px;width:1.00px;height:12.00px;background:#a0a0a0;"></div>
<span class="t" style="left:841.50px;top:652.44px;font-size:12px;line-height:16px;color:#a9a9a9;letter-spacing:-0.080px;">background grid animation</span>
<svg style="left:1046.00px;top:656.00px;" width="8" height="8" viewBox="0 0 8 8"><path d="M0.6 0.6L7.4 7.4M7.4 0.6L0.6 7.4" stroke="#a8a8a8" stroke-width="1"/></svg>
<div style="left:1063.00px;top:654.00px;width:1.00px;height:12.00px;background:#a0a0a0;"></div>
<span class="t" style="left:1118.50px;top:652.44px;font-size:12px;line-height:16px;color:#a9a9a9;letter-spacing:-0.074px;">background grid animation 1</span>
<svg style="left:1327.50px;top:656.00px;" width="8" height="8" viewBox="0 0 8 8"><path d="M0.6 0.6L7.4 7.4M7.4 0.6L0.6 7.4" stroke="#a8a8a8" stroke-width="1"/></svg>
<div style="left:1345.00px;top:654.00px;width:1.00px;height:12.00px;background:#a0a0a0;"></div>
<span class="t" style="left:1400.50px;top:652.44px;font-size:12px;line-height:16px;color:#a9a9a9;letter-spacing:-0.074px;">background grid animation 2</span>
<svg style="left:1609.50px;top:656.00px;" width="8" height="8" viewBox="0 0 8 8"><path d="M0.6 0.6L7.4 7.4M7.4 0.6L0.6 7.4" stroke="#a8a8a8" stroke-width="1"/></svg>
<div style="left:1627.00px;top:650.50px;width:282.00px;height:19.50px;background:#454545;border-radius:4px 4px 0 0;"></div>
<span class="t" style="left:1714.00px;top:652.44px;font-size:12px;line-height:16px;color:#dcdcdc;letter-spacing:0.118px;">duplicator blend</span>
<svg style="left:1891.50px;top:656.00px;" width="8" height="8" viewBox="0 0 8 8"><path d="M0.6 0.6L7.4 7.4M7.4 0.6L0.6 7.4" stroke="#a8a8a8" stroke-width="1"/></svg>
<div style="left:494.00px;top:670.00px;width:525.00px;height:328.00px;background:#3a3a3a;"></div>
<div style="left:494.00px;top:670.00px;width:525.00px;height:42.00px;background:#454545;"></div>
<div style="left:496.00px;top:673.00px;width:314.50px;height:18.50px;background:#242424;border-radius:10px;"></div>
<svg style="left:500.50px;top:676.50px;" width="12" height="12" viewBox="0 0 12 12"><circle cx="5" cy="5" r="4.3" fill="none" stroke="#d8d8d8" stroke-width="1.1"/><path d="M8.2 8.2L11.5 11.5" stroke="#d8d8d8" stroke-width="1.8"/></svg>
<span class="t" style="left:520.00px;top:675.14px;font-size:12px;line-height:16px;color:#8c8c8c;letter-spacing:-0.258px;">Enter a layer name</span>
<div style="left:813.30px;top:672.80px;width:19.40px;height:18.50px;background:#2a2a2a;border-radius:3.5px;box-shadow:0 0 0 1px #383838 inset;"></div>
<svg style="left:817.50px;top:676.50px;" width="11" height="11" viewBox="0 0 11 11"><path d="M5.5 0.5V10.5M0.5 5.5H10.5" stroke="#e6e6e6" stroke-width="1.7"/></svg>
<svg style="left:828.00px;top:687.00px;" width="4" height="4" viewBox="0 0 4 4"><path d="M4 0V4H0Z" fill="#6fcdb4"/></svg>
<div style="left:857.50px;top:672.80px;width:19.00px;height:18.50px;background:#2a2a2a;border-radius:3.5px;box-shadow:0 0 0 1px #383838 inset;"></div>
<div style="left:879.50px;top:672.80px;width:18.50px;height:18.50px;background:#2a2a2a;border-radius:3.5px;box-shadow:0 0 0 1px #383838 inset;"></div>
<div style="left:901.00px;top:672.80px;width:19.00px;height:18.50px;background:#2a2a2a;border-radius:3.5px;box-shadow:0 0 0 1px #383838 inset;"></div>
<svg style="left:860.50px;top:675.50px;" width="14" height="14" viewBox="0 0 14 14"><circle cx="4.5" cy="9.5" r="3.5" fill="#6d6d6d"/><circle cx="6.5" cy="7.5" r="3.7" fill="#9b9b9b"/><circle cx="9" cy="5" r="4" fill="#dcdcdc"/></svg>
<svg style="left:882.00px;top:675.50px;" width="14" height="14" viewBox="0 0 14 14"><path d="M8.8 4.6Q9.3 8.3 13 8.8Q9.3 9.3 8.8 13Q8.3 9.3 4.6 8.8Q8.3 8.3 8.8 4.6Z" fill="#e8e8e8" stroke="#e8e8e8" stroke-width="0.5"/><circle cx="2.8" cy="2.3" r="1.15" fill="#cfcfcf"/><circle cx="8.8" cy="2.3" r="1.15" fill="#cfcfcf"/><circle cx="2.8" cy="8.3" r="1.15" fill="#cfcfcf"/><path d="M14 11V14H11Z" fill="#6fcdb4"/></svg>
<svg style="left:904.00px;top:675.50px;" width="13" height="13" viewBox="0 0 13 13"><path d="M0 2.5H13M0 6.5H13M0 10.5H13" stroke="#d8d8d8" stroke-width="1"/><circle cx="4" cy="2.5" r="1.6" fill="#2a2a2a" stroke="#d8d8d8"/><circle cx="9" cy="6.5" r="1.6" fill="#2a2a2a" stroke="#d8d8d8"/><circle cx="5" cy="10.5" r="1.6" fill="#2a2a2a" stroke="#d8d8d8"/></svg>
<div style="left:921.00px;top:671.00px;width:97.00px;height:22.50px;background:#272727;"></div>
<span class="t" style="left:928.00px;top:675.34px;font-size:12px;line-height:16px;color:#4e4e4e;">F</span>
<span class="t" style="left:940.00px;top:675.34px;font-size:12px;line-height:16px;color:#e2e2e2;letter-spacing:0.652px;">38</span>
<svg style="left:500.00px;top:697.00px;" width="9" height="11" viewBox="0 0 9 11"><rect x="0" y="4.5" width="9" height="6.5" rx="0.8" fill="#d2d2d2"/><path d="M2 5V3Q2 0.7 4.5 0.7T7 3V5" fill="none" stroke="#d2d2d2" stroke-width="1.3"/><rect x="4" y="6.5" width="1.2" height="2.5" fill="#454545"/></svg>
<svg style="left:517.00px;top:698.20px;" width="14" height="9" viewBox="0 0 14 9"><path d="M0.5 4.5Q7 -3 13.5 4.5Q7 12 0.5 4.5Z" fill="none" stroke="#d2d2d2" stroke-width="1"/><circle cx="7" cy="4.5" r="2.1" fill="#d2d2d2"/></svg>
<svg style="left:537.00px;top:696.50px;" width="12" height="13" viewBox="0 0 12 13"><path d="M6 0.6L11.4 3.3V9.7L6 12.4L0.6 9.7V3.3Z M0.6 3.3L6 6L11.4 3.3M6 6V12.4" fill="none" stroke="#d2d2d2" stroke-width="1"/></svg>
<svg style="left:556.00px;top:697.00px;" width="13" height="11" viewBox="0 0 13 11"><path d="M0.5 3.5H3L6.5 0.5V10.5L3 7.5H0.5Z" fill="#d2d2d2"/><path d="M8 3Q9.6 5.5 8 8M9.8 1.3Q12.6 5.5 9.8 9.7" fill="none" stroke="#d2d2d2" stroke-width="1.1"/></svg>
<svg style="left:575.00px;top:696.50px;" width="12" height="12" viewBox="0 0 12 12"><path d="M9.2 0.8L11.2 2.8L9 5L9.8 5.8L8.8 6.8L5.2 3.2L6.2 2.2L7 3Z" fill="#cfcfcf"/><path d="M6.6 4.6L1.5 9.7L0.8 11.2L2.3 10.5L7.4 5.4" fill="none" stroke="#bdbdbd" stroke-width="1.1"/></svg>
<svg style="left:593.00px;top:698.30px;" width="14" height="9" viewBox="0 0 14 9"><path d="M4.5 0.5H13.5V8.5H4.5L0.5 4.5Z" fill="#d2d2d2"/><circle cx="4.6" cy="4.5" r="1.4" fill="#454545"/></svg>
<span class="t" style="left:649.00px;top:695.84px;font-size:12px;line-height:16px;color:#e2e2e2;letter-spacing:-0.337px;">Name</span>
<div style="left:494px;top:711.7px;width:525px;height:250.3px;overflow:hidden;">
<div style="left:2.20px;top:2.60px;width:17.60px;height:17.80px;background:#2a2a2a;border-radius:3px;"></div>
<div style="left:21.00px;top:2.60px;width:17.60px;height:17.80px;background:#2a2a2a;border-radius:3px;"></div>
<svg style="left:23.00px;top:7.00px;" width="14" height="9" viewBox="0 0 14 9"><path d="M0.5 4.5Q7 -3 13.5 4.5Q7 12 0.5 4.5Z" fill="none" stroke="#d8d8d8" stroke-width="1"/><circle cx="7" cy="4.5" r="2.1" fill="#d8d8d8"/></svg>
<div style="left:40.20px;top:2.60px;width:17.60px;height:17.80px;background:#2a2a2a;border-radius:3px;"></div>
<div style="left:79.00px;top:3.60px;width:16.00px;height:15.60px;background:#c4c4c4;border-radius:2.5px;"></div>
<svg style="left:99.00px;top:6.80px;" width="14" height="9" viewBox="0 0 14 9"><path d="M4.5 0.5H13.5V8.5H4.5L0.5 4.5Z" fill="#d8d8d8"/><circle cx="4.6" cy="4.5" r="1.4" fill="#3a3a3a"/></svg>
<div style="left:116.80px;top:3.60px;width:14.20px;height:15.60px;background:#343434;border-radius:2.5px;"></div>
<div style="left:133.00px;top:3.60px;width:14.00px;height:15.60px;background:#343434;border-radius:2.5px;"></div>
<svg style="left:119.50px;top:9.10px;" width="9" height="6" viewBox="0 0 9 6"><path d="M0.7 0.7L4.5 4.5L8.3 0.7" fill="none" stroke="#808080" stroke-width="1.1"/></svg>
<svg style="left:153.70px;top:5.10px;" width="14" height="12" viewBox="0 0 14 12"><path d="M0 1H5L6.3 2.8H14V11.5H0Z" fill="#cfcfcf"/><path d="M0 3.8H14" stroke="#3b3b3b" stroke-width="0.7"/></svg>
<span class="t" style="left:173.00px;top:4.14px;font-size:12px;line-height:16px;color:#e2e2e2;">3</span>
<svg style="left:497.00px;top:6.60px;" width="10" height="10" viewBox="0 0 10 10"><circle cx="5" cy="5" r="4.2" fill="none" stroke="#a0a0a0" stroke-width="1"/></svg>
<div style="left:2.20px;top:24.60px;width:17.60px;height:17.80px;background:#2a2a2a;border-radius:3px;"></div>
<div style="left:21.00px;top:24.60px;width:17.60px;height:17.80px;background:#2a2a2a;border-radius:3px;"></div>
<svg style="left:24.00px;top:27.10px;" width="12" height="12" viewBox="0 0 12 12"><circle cx="5.6" cy="6.2" r="4.7" fill="none" stroke="#dcdcdc" stroke-width="1.15"/><path d="M3.2 6.2L5.2 8.2L10.5 2" fill="none" stroke="#dcdcdc" stroke-width="1.4"/></svg>
<div style="left:79.00px;top:25.60px;width:16.00px;height:15.60px;background:#c6ef7e;border-radius:2.5px;"></div>
<svg style="left:99.00px;top:28.80px;" width="14" height="9" viewBox="0 0 14 9"><path d="M4.5 0.5H13.5V8.5H4.5L0.5 4.5Z" fill="#d8d8d8"/><circle cx="4.6" cy="4.5" r="1.4" fill="#3a3a3a"/></svg>
<div style="left:135.80px;top:25.60px;width:14.20px;height:15.60px;background:#343434;border-radius:2.5px;"></div>
<div style="left:152.00px;top:25.60px;width:15.00px;height:15.60px;background:#343434;border-radius:2.5px;"></div>
<svg style="left:138.50px;top:31.10px;" width="9" height="6" viewBox="0 0 9 6"><path d="M0.7 0.7L4.5 4.5L8.3 0.7" fill="none" stroke="#808080" stroke-width="1.1"/></svg>
<svg style="left:156.00px;top:30.10px;" width="7" height="7" viewBox="0 0 7 7"><circle cx="3.5" cy="3.5" r="3.1" fill="#ededed"/></svg>
<svg style="left:173.00px;top:27.60px;" width="15" height="12" viewBox="0 0 15 12"><rect x="0.5" y="2.5" width="2.5" height="2.5" fill="#5f9c6a"/><rect x="0.5" y="5" width="2.5" height="2.5" fill="#cfeccf"/><rect x="0.5" y="7.5" width="2.5" height="2.5" fill="#3f6f4a"/><rect x="0.5" y="10" width="2.5" height="2.5" fill="#9ad79f"/><rect x="3" y="0" width="2.5" height="2.5" fill="#3f6f4a"/><rect x="3" y="2.5" width="2.5" height="2.5" fill="#5f9c6a"/><rect x="3" y="5" width="2.5" height="2.5" fill="#3f6f4a"/><rect x="3" y="7.5" width="2.5" height="2.5" fill="#5f9c6a"/><rect x="3" y="10" width="2.5" height="2.5" fill="#3f6f4a"/><rect x="5.5" y="0" width="2.5" height="2.5" fill="#cfeccf"/><rect x="5.5" y="2.5" width="2.5" height="2.5" fill="#5f9c6a"/><rect x="5.5" y="5" width="2.5" height="2.5" fill="#9ad79f"/><rect x="5.5" y="7.5" width="2.5" height="2.5" fill="#3f6f4a"/><rect x="5.5" y="10" width="2.5" height="2.5" fill="#cfeccf"/><rect x="8" y="0" width="2.5" height="2.5" fill="#5f9c6a"/><rect x="8" y="2.5" width="2.5" height="2.5" fill="#5f9c6a"/><rect x="8" y="5" width="2.5" height="2.5" fill="#5f9c6a"/><rect x="8" y="7.5" width="2.5" height="2.5" fill="#5f9c6a"/><rect x="8" y="10" width="2.5" height="2.5" fill="#5f9c6a"/><rect x="10.5" y="0" width="2.5" height="2.5" fill="#9ad79f"/><rect x="10.5" y="2.5" width="2.5" height="2.5" fill="#5f9c6a"/><rect x="10.5" y="5" width="2.5" height="2.5" fill="#cfeccf"/><rect x="10.5" y="7.5" width="2.5" height="2.5" fill="#3f6f4a"/><rect x="10.5" y="10" width="2.5" height="2.5" fill="#9ad79f"/><rect x="13" y="2.5" width="2.5" height="2.5" fill="#5f9c6a"/><rect x="13" y="5" width="2.5" height="2.5" fill="#3f6f4a"/><rect x="13" y="7.5" width="2.5" height="2.5" fill="#5f9c6a"/><rect x="13" y="10" width="2.5" height="2.5" fill="#3f6f4a"/></svg>
<span class="t" style="left:192.30px;top:26.14px;font-size:12px;line-height:16px;color:#e2e2e2;letter-spacing:0.005px;">TransitionNoise</span>
<div style="left:470.80px;top:25.60px;width:21.20px;height:15.80px;background:#2a2a2a;border-radius:3px;"></div>
<svg style="left:473.30px;top:29.50px;" width="6" height="8" viewBox="0 0 6 8"><path d="M6 0.5H3.6L0.3 4L3.6 7.5H6Z" fill="#777"/></svg>
<svg style="left:484.00px;top:29.50px;" width="6" height="8" viewBox="0 0 6 8"><path d="M0 0.5H2.4L5.7 4L2.4 7.5H0Z" fill="#c95cec"/></svg>
<svg style="left:497.00px;top:28.60px;" width="10" height="10" viewBox="0 0 10 10"><circle cx="5" cy="5" r="4.2" fill="none" stroke="#a0a0a0" stroke-width="1"/></svg>
<svg style="left:158.70px;top:46.10px;" width="10" height="11" viewBox="0 0 10 11"><path d="M0.5 0V8.5H9.5" fill="none" stroke="#c8c8c8" stroke-width="1" stroke-dasharray="1 1"/></svg>
<span class="t" style="left:171.70px;top:48.04px;font-size:12px;line-height:16px;color:#e2e2e2;letter-spacing:0.162px;">Strength</span>
<div style="left:413.00px;top:47.30px;width:84.00px;height:15.50px;background:#2a2a2a;border-radius:2.5px;"></div>
<div style="left:497.00px;top:47.30px;width:10.50px;height:15.50px;background:#3d3d3d;border-radius:0 2.5px 2.5px 0;"></div>
<span class="t" style="left:416.50px;top:48.73px;font-size:11.5px;line-height:15px;color:#777;">%</span>
<span class="t" style="left:430.00px;top:48.44px;font-size:12px;line-height:16px;color:#e2e2e2;letter-spacing:-0.091px;">0.0</span>
<svg style="left:484.30px;top:50.60px;" width="9" height="9" viewBox="0 0 9 9"><path d="M4.5 0.3L8.7 4.5L4.5 8.7L0.3 4.5Z" fill="#cfcfcf"/></svg>
<svg style="left:499.50px;top:51.30px;" width="6" height="8" viewBox="0 0 6 8"><path d="M0 0.5H2.4L5.7 4L2.4 7.5H0Z" fill="#8a8a8a"/></svg>
<div style="left:2.20px;top:68.60px;width:17.60px;height:17.80px;background:#2a2a2a;border-radius:3px;"></div>
<div style="left:21.00px;top:68.60px;width:17.60px;height:17.80px;background:#2a2a2a;border-radius:3px;"></div>
<svg style="left:24.00px;top:71.10px;" width="12" height="12" viewBox="0 0 12 12"><circle cx="5.6" cy="6.2" r="4.7" fill="none" stroke="#dcdcdc" stroke-width="1.15"/><path d="M3.2 6.2L5.2 8.2L10.5 2" fill="none" stroke="#dcdcdc" stroke-width="1.4"/></svg>
<div style="left:79.00px;top:69.60px;width:16.00px;height:15.60px;background:#c6ef7e;border-radius:2.5px;"></div>
<svg style="left:99.00px;top:72.80px;" width="14" height="9" viewBox="0 0 14 9"><path d="M4.5 0.5H13.5V8.5H4.5L0.5 4.5Z" fill="#d8d8d8"/><circle cx="4.6" cy="4.5" r="1.4" fill="#3a3a3a"/></svg>
<svg style="left:174.00px;top:71.60px;" width="13" height="12" viewBox="0 0 13 12"><path d="M3 0.5H10L6.5 4.5Z" fill="#7fd88c"/><path d="M6.5 4V12" stroke="#5f9c6a" stroke-width="1.5"/><path d="M0.5 5.5V7.5M12.5 5.5V7.5" stroke="#d8d8d8" stroke-width="1"/></svg>
<span class="t" style="left:192.30px;top:70.14px;font-size:12px;line-height:16px;color:#e2e2e2;letter-spacing:-0.132px;">Frame [Start Angle]</span>
<div style="left:470.80px;top:69.60px;width:21.20px;height:15.80px;background:#2a2a2a;border-radius:3px;"></div>
<svg style="left:473.30px;top:73.50px;" width="6" height="8" viewBox="0 0 6 8"><path d="M6 0.5H3.6L0.3 4L3.6 7.5H6Z" fill="#777"/></svg>
<svg style="left:484.00px;top:73.50px;" width="6" height="8" viewBox="0 0 6 8"><path d="M0 0.5H2.4L5.7 4L2.4 7.5H0Z" fill="#c95cec"/></svg>
<svg style="left:497.00px;top:72.60px;" width="10" height="10" viewBox="0 0 10 10"><circle cx="5" cy="5" r="4.2" fill="none" stroke="#a0a0a0" stroke-width="1"/></svg>
<div style="left:0.00px;top:89.70px;width:509.30px;height:19.40px;background:#5b533f;border-radius:0 4px 4px 0;"></div>
<div style="left:2.20px;top:90.60px;width:17.60px;height:17.80px;background:#2a2a2a;border-radius:3px;"></div>
<div style="left:21.00px;top:90.60px;width:17.60px;height:17.80px;background:#2a2a2a;border-radius:3px;"></div>
<svg style="left:23.00px;top:95.00px;" width="14" height="9" viewBox="0 0 14 9"><path d="M0.5 4.5Q7 -3 13.5 4.5Q7 12 0.5 4.5Z" fill="none" stroke="#d8d8d8" stroke-width="1"/><circle cx="7" cy="4.5" r="2.1" fill="#d8d8d8"/></svg>
<div style="left:40.20px;top:90.60px;width:17.60px;height:17.80px;background:#2a2a2a;border-radius:3px;"></div>
<div style="left:79.00px;top:91.60px;width:16.00px;height:15.60px;background:#ffe47e;border-radius:2.5px;"></div>
<svg style="left:99.00px;top:94.80px;" width="14" height="9" viewBox="0 0 14 9"><path d="M4.5 0.5H13.5V8.5H4.5L0.5 4.5Z" fill="#d8d8d8"/><circle cx="4.6" cy="4.5" r="1.4" fill="#5b533f"/></svg>
<svg style="left:174.00px;top:93.60px;" width="13" height="12" viewBox="0 0 13 12"><rect x="0" y="0" width="1.8" height="1.8" fill="#e6c95c"/><rect x="0" y="4.6" width="1.8" height="1.8" fill="#e6c95c"/><rect x="0" y="9.2" width="1.8" height="1.8" fill="#e6c95c"/><rect x="5.2" y="0" width="1.8" height="1.8" fill="#e6c95c"/><rect x="5.2" y="4.6" width="1.8" height="1.8" fill="#e6c95c"/><rect x="5.2" y="9.2" width="1.8" height="1.8" fill="#e6c95c"/><rect x="10.4" y="0" width="1.8" height="1.8" fill="#e6c95c"/><rect x="10.4" y="4.6" width="1.8" height="1.8" fill="#e6c95c"/><rect x="10.4" y="9.2" width="1.8" height="1.8" fill="#e6c95c"/></svg>
<span class="t" style="left:192.30px;top:92.14px;font-size:12px;line-height:16px;color:#e2e2e2;letter-spacing:0.023px;">RingDuplicator</span>
<div style="left:470.80px;top:91.60px;width:21.20px;height:15.80px;background:#2a2a2a;border-radius:3px;"></div>
<svg style="left:473.30px;top:95.50px;" width="6" height="8" viewBox="0 0 6 8"><path d="M6 0.5H3.6L0.3 4L3.6 7.5H6Z" fill="#e0c369"/></svg>
<svg style="left:484.00px;top:95.50px;" width="6" height="8" viewBox="0 0 6 8"><path d="M0 0.5H2.4L5.7 4L2.4 7.5H0Z" fill="#c95cec"/></svg>
<div style="left:482.00px;top:91.60px;width:9.50px;height:15.80px;border-radius:1.5px;box-shadow:0 0 0 1px #a45bbd inset;"></div>
<svg style="left:497.00px;top:94.60px;" width="10" height="10" viewBox="0 0 10 10"><circle cx="5" cy="5" r="4.2" fill="none" stroke="#8a8a8a" stroke-width="1"/></svg>
<div style="left:2.20px;top:112.60px;width:17.60px;height:17.80px;background:#2a2a2a;border-radius:3px;"></div>
<div style="left:21.00px;top:112.60px;width:17.60px;height:17.80px;background:#2a2a2a;border-radius:3px;"></div>
<div style="left:40.20px;top:112.60px;width:17.60px;height:17.80px;background:#2a2a2a;border-radius:3px;"></div>
<div style="left:79.00px;top:113.60px;width:16.00px;height:15.60px;background:#ffe47e;border-radius:2.5px;"></div>
<svg style="left:99.00px;top:116.80px;" width="14" height="9" viewBox="0 0 14 9"><path d="M4.5 0.5H13.5V8.5H4.5L0.5 4.5Z" fill="#d8d8d8"/><circle cx="4.6" cy="4.5" r="1.4" fill="#3a3a3a"/></svg>
<svg style="left:174.00px;top:115.60px;" width="12" height="12" viewBox="0 0 12 12"><path d="M3.5 0.9H8.5M3.5 11.1H8.5M0.9 3.5V8.5M11.1 3.5V8.5" stroke="#e6c95c" stroke-width="1.2" stroke-dasharray="2.2 0.6"/><g fill="#f0f0f0"><rect x="0" y="0" width="2" height="2"/><rect x="10" y="0" width="2" height="2"/><rect x="0" y="10" width="2" height="2"/><rect x="10" y="10" width="2" height="2"/></g></svg>
<span class="t" style="left:192.30px;top:114.14px;font-size:12px;line-height:16px;color:#9b9b9b;letter-spacing:-0.457px;">Ellipse Shape 2</span>
<div style="left:470.80px;top:113.60px;width:21.20px;height:15.80px;background:#2a2a2a;border-radius:3px;"></div>
<svg style="left:473.30px;top:117.50px;" width="6" height="8" viewBox="0 0 6 8"><path d="M6 0.5H3.6L0.3 4L3.6 7.5H6Z" fill="#777"/></svg>
<svg style="left:484.00px;top:117.50px;" width="6" height="8" viewBox="0 0 6 8"><path d="M0 0.5H2.4L5.7 4L2.4 7.5H0Z" fill="#c95cec"/></svg>
<svg style="left:497.00px;top:116.60px;" width="10" height="10" viewBox="0 0 10 10"><circle cx="5" cy="5" r="4.2" fill="none" stroke="#a0a0a0" stroke-width="1"/></svg>
<div style="left:2.20px;top:134.60px;width:17.60px;height:17.80px;background:#2a2a2a;border-radius:3px;"></div>
<div style="left:21.00px;top:134.60px;width:17.60px;height:17.80px;background:#2a2a2a;border-radius:3px;"></div>
<svg style="left:24.00px;top:137.10px;" width="12" height="12" viewBox="0 0 12 12"><circle cx="5.6" cy="6.2" r="4.7" fill="none" stroke="#dcdcdc" stroke-width="1.15"/><path d="M3.2 6.2L5.2 8.2L10.5 2" fill="none" stroke="#dcdcdc" stroke-width="1.4"/></svg>
<div style="left:79.00px;top:135.60px;width:16.00px;height:15.60px;background:#c6ef7e;border-radius:2.5px;"></div>
<svg style="left:99.00px;top:138.80px;" width="14" height="9" viewBox="0 0 14 9"><path d="M4.5 0.5H13.5V8.5H4.5L0.5 4.5Z" fill="#d8d8d8"/><circle cx="4.6" cy="4.5" r="1.4" fill="#3a3a3a"/></svg>
<svg style="left:154.00px;top:137.60px;" width="14" height="12" viewBox="0 0 14 12"><rect x="0" y="0.5" width="7" height="2.6" fill="#8fdc9c"/><rect x="3.5" y="4.2" width="7" height="2.6" fill="#8fdc9c"/><rect x="7.5" y="7.9" width="6.5" height="2.6" fill="#8fdc9c"/><path d="M0 3.8H3M3.5 7.5H7" stroke="#d8d8d8" stroke-width="0.8"/></svg>
<span class="t" style="left:173.30px;top:136.14px;font-size:12px;line-height:16px;color:#e2e2e2;letter-spacing:0.131px;">TransitionOffset</span>
<div style="left:470.80px;top:135.60px;width:21.20px;height:15.80px;background:#2a2a2a;border-radius:3px;"></div>
<svg style="left:473.30px;top:139.50px;" width="6" height="8" viewBox="0 0 6 8"><path d="M6 0.5H3.6L0.3 4L3.6 7.5H6Z" fill="#777"/></svg>
<svg style="left:484.00px;top:139.50px;" width="6" height="8" viewBox="0 0 6 8"><path d="M0 0.5H2.4L5.7 4L2.4 7.5H0Z" fill="#c95cec"/></svg>
<svg style="left:497.00px;top:138.60px;" width="10" height="10" viewBox="0 0 10 10"><circle cx="5" cy="5" r="4.2" fill="none" stroke="#a0a0a0" stroke-width="1"/></svg>
<div style="left:2.20px;top:156.60px;width:17.60px;height:17.80px;background:#2a2a2a;border-radius:3px;"></div>
<div style="left:21.00px;top:156.60px;width:17.60px;height:17.80px;background:#2a2a2a;border-radius:3px;"></div>
<svg style="left:24.00px;top:159.10px;" width="12" height="12" viewBox="0 0 12 12"><circle cx="5.6" cy="6.2" r="4.7" fill="none" stroke="#dcdcdc" stroke-width="1.15"/><path d="M3.2 6.2L5.2 8.2L10.5 2" fill="none" stroke="#dcdcdc" stroke-width="1.4"/></svg>
<div style="left:79.00px;top:157.60px;width:16.00px;height:15.60px;background:#c6ef7e;border-radius:2.5px;"></div>
<svg style="left:99.00px;top:160.80px;" width="14" height="9" viewBox="0 0 14 9"><path d="M4.5 0.5H13.5V8.5H4.5L0.5 4.5Z" fill="#d8d8d8"/><circle cx="4.6" cy="4.5" r="1.4" fill="#3a3a3a"/></svg>
<div style="left:116.80px;top:157.60px;width:14.20px;height:15.60px;background:#343434;border-radius:2.5px;"></div>
<div style="left:133.00px;top:157.60px;width:14.00px;height:15.60px;background:#343434;border-radius:2.5px;"></div>
<svg style="left:119.50px;top:163.10px;" width="9" height="6" viewBox="0 0 9 6"><path d="M0.7 0.7L4.5 4.5L8.3 0.7" fill="none" stroke="#808080" stroke-width="1.1"/></svg>
<svg style="left:136.40px;top:162.10px;" width="7" height="7" viewBox="0 0 7 7"><circle cx="3.5" cy="3.5" r="3.1" fill="#ededed"/></svg>
<svg style="left:154.00px;top:159.60px;" width="15" height="12" viewBox="0 0 15 12"><g fill="#d8d8d8"><rect x="0" y="0" width="2" height="2"/><rect x="0" y="5" width="2" height="2"/><rect x="0" y="10" width="2" height="2"/><rect x="13" y="0" width="2" height="2"/><rect x="13" y="5" width="2" height="2"/><rect x="13" y="10" width="2" height="2"/><rect x="4.5" y="10.3" width="6.5" height="1.5"/></g><path d="M4.5 0.5L10.5 6.5M10.5 0.5L4.5 6.5" stroke="#d8d8d8" stroke-width="1"/></svg>
<span class="t" style="left:173.30px;top:158.14px;font-size:12px;line-height:16px;color:#e2e2e2;letter-spacing:0.548px;">2to3</span>
<div style="left:470.80px;top:157.60px;width:21.20px;height:15.80px;background:#2a2a2a;border-radius:3px;"></div>
<svg style="left:473.30px;top:161.50px;" width="6" height="8" viewBox="0 0 6 8"><path d="M6 0.5H3.6L0.3 4L3.6 7.5H6Z" fill="#e0c369"/></svg>
<svg style="left:484.00px;top:161.50px;" width="6" height="8" viewBox="0 0 6 8"><path d="M0 0.5H2.4L5.7 4L2.4 7.5H0Z" fill="#c95cec"/></svg>
<svg style="left:497.00px;top:160.60px;" width="10" height="10" viewBox="0 0 10 10"><circle cx="5" cy="5" r="4.2" fill="none" stroke="#a0a0a0" stroke-width="1"/></svg>
<svg style="left:140.30px;top:178.10px;" width="10" height="11" viewBox="0 0 10 11"><path d="M0.5 0V8.5H9.5" fill="none" stroke="#c8c8c8" stroke-width="1" stroke-dasharray="1 1"/></svg>
<span class="t" style="left:153.30px;top:180.04px;font-size:12px;line-height:16px;color:#e2e2e2;letter-spacing:-0.173px;">Blend</span>
<div style="left:413.00px;top:179.30px;width:84.00px;height:15.50px;background:#2a2a2a;border-radius:2.5px;"></div>
<div style="left:497.00px;top:179.30px;width:10.50px;height:15.50px;background:#3d3d3d;border-radius:0 2.5px 2.5px 0;"></div>
<span class="t" style="left:416.50px;top:180.73px;font-size:11.5px;line-height:15px;color:#777;">%</span>
<span class="t" style="left:430.00px;top:180.44px;font-size:12px;line-height:16px;color:#e2e2e2;letter-spacing:-0.091px;">0.0</span>
<svg style="left:484.30px;top:182.60px;" width="9" height="9" viewBox="0 0 9 9"><path d="M4.5 0.3L8.7 4.5L4.5 8.7L0.3 4.5Z" fill="#2ecc71"/></svg>
<svg style="left:499.50px;top:183.30px;" width="6" height="8" viewBox="0 0 6 8"><path d="M0 0.5H2.4L5.7 4L2.4 7.5H0Z" fill="#8a8a8a"/></svg>
<div style="left:2.20px;top:200.60px;width:17.60px;height:17.80px;background:#2a2a2a;border-radius:3px;"></div>
<div style="left:21.00px;top:200.60px;width:17.60px;height:17.80px;background:#2a2a2a;border-radius:3px;"></div>
<div style="left:40.20px;top:200.60px;width:17.60px;height:17.80px;background:#2a2a2a;border-radius:3px;"></div>
<div style="left:79.00px;top:201.60px;width:16.00px;height:15.60px;background:#c4c4c4;border-radius:2.5px;"></div>
<svg style="left:99.00px;top:204.80px;" width="14" height="9" viewBox="0 0 14 9"><path d="M4.5 0.5H13.5V8.5H4.5L0.5 4.5Z" fill="#d8d8d8"/><circle cx="4.6" cy="4.5" r="1.4" fill="#3a3a3a"/></svg>
<div style="left:116.80px;top:201.60px;width:14.20px;height:15.60px;background:#343434;border-radius:2.5px;"></div>
<div style="left:133.00px;top:201.60px;width:14.00px;height:15.60px;background:#343434;border-radius:2.5px;"></div>
<svg style="left:119.50px;top:207.10px;" width="9" height="6" viewBox="0 0 9 6"><path d="M0.7 0.7L4.5 4.5L8.3 0.7" fill="none" stroke="#808080" stroke-width="1.1"/></svg>
<svg style="left:153.70px;top:203.10px;" width="14" height="12" viewBox="0 0 14 12"><path d="M0 1H5L6.3 2.8H14V11.5H0Z" fill="#cfcfcf"/><path d="M0 3.8H14" stroke="#3b3b3b" stroke-width="0.7"/></svg>
<span class="t" style="left:173.00px;top:202.14px;font-size:12px;line-height:16px;color:#b0b0b0;">2</span>
<svg style="left:497.00px;top:204.60px;" width="10" height="10" viewBox="0 0 10 10"><circle cx="5" cy="5" r="4.2" fill="none" stroke="#a0a0a0" stroke-width="1"/></svg>
<div style="left:2.20px;top:222.60px;width:17.60px;height:17.80px;background:#2a2a2a;border-radius:3px;"></div>
<div style="left:21.00px;top:222.60px;width:17.60px;height:17.80px;background:#2a2a2a;border-radius:3px;"></div>
<svg style="left:24.00px;top:225.10px;" width="12" height="12" viewBox="0 0 12 12"><circle cx="5.6" cy="6.2" r="4.7" fill="none" stroke="#dcdcdc" stroke-width="1.15"/><path d="M3.2 6.2L5.2 8.2L10.5 2" fill="none" stroke="#dcdcdc" stroke-width="1.4"/></svg>
<div style="left:79.00px;top:223.60px;width:16.00px;height:15.60px;background:#c6ef7e;border-radius:2.5px;"></div>
<svg style="left:99.00px;top:226.80px;" width="14" height="9" viewBox="0 0 14 9"><path d="M4.5 0.5H13.5V8.5H4.5L0.5 4.5Z" fill="#d8d8d8"/><circle cx="4.6" cy="4.5" r="1.4" fill="#3a3a3a"/></svg>
<svg style="left:173.00px;top:225.60px;" width="14" height="12" viewBox="0 0 14 12"><path d="M0.5 0.5l3 3m0 -3l-3 3" stroke="#8fdc9c" stroke-width="1"/><path d="M10 3.5l3 3m0 -3l-3 3" stroke="#8fdc9c" stroke-width="1"/><path d="M1.5 9l3 3m0 -3l-3 3" stroke="#8fdc9c" stroke-width="1"/><path d="M9 9.5l3 3m0 -3l-3 3" stroke="#8fdc9c" stroke-width="1"/><rect x="6" y="5.5" width="2" height="2" fill="#8fdc9c"/><rect x="11" y="0" width="1.8" height="1.8" fill="#8fdc9c"/></svg>
<span class="t" style="left:192.30px;top:224.14px;font-size:12px;line-height:16px;color:#e2e2e2;letter-spacing:-0.443px;">Random [Shape Scale]</span>
<div style="left:470.80px;top:223.60px;width:21.20px;height:15.80px;background:#2a2a2a;border-radius:3px;"></div>
<svg style="left:473.30px;top:227.50px;" width="6" height="8" viewBox="0 0 6 8"><path d="M6 0.5H3.6L0.3 4L3.6 7.5H6Z" fill="#777"/></svg>
<svg style="left:484.00px;top:227.50px;" width="6" height="8" viewBox="0 0 6 8"><path d="M0 0.5H2.4L5.7 4L2.4 7.5H0Z" fill="#c95cec"/></svg>
<svg style="left:497.00px;top:226.60px;" width="10" height="10" viewBox="0 0 10 10"><circle cx="5" cy="5" r="4.2" fill="none" stroke="#a0a0a0" stroke-width="1"/></svg>
<div style="left:2.20px;top:244.60px;width:17.60px;height:17.80px;background:#2a2a2a;border-radius:3px;"></div>
<div style="left:21.00px;top:244.60px;width:17.60px;height:17.80px;background:#2a2a2a;border-radius:3px;"></div>
<svg style="left:24.00px;top:247.10px;" width="12" height="12" viewBox="0 0 12 12"><circle cx="5.6" cy="6.2" r="4.7" fill="none" stroke="#dcdcdc" stroke-width="1.15"/><path d="M3.2 6.2L5.2 8.2L10.5 2" fill="none" stroke="#dcdcdc" stroke-width="1.4"/></svg>
<div style="left:79.00px;top:245.60px;width:16.00px;height:15.60px;background:#c6ef7e;border-radius:2.5px;"></div>
<svg style="left:99.00px;top:248.80px;" width="14" height="9" viewBox="0 0 14 9"><path d="M4.5 0.5H13.5V8.5H4.5L0.5 4.5Z" fill="#d8d8d8"/><circle cx="4.6" cy="4.5" r="1.4" fill="#3a3a3a"/></svg>
<div style="left:135.80px;top:245.60px;width:14.20px;height:15.60px;background:#343434;border-radius:2.5px;"></div>
<div style="left:152.00px;top:245.60px;width:15.00px;height:15.60px;background:#343434;border-radius:2.5px;"></div>
<svg style="left:138.50px;top:251.10px;" width="9" height="6" viewBox="0 0 9 6"><path d="M0.7 0.7L4.5 4.5L8.3 0.7" fill="none" stroke="#808080" stroke-width="1.1"/></svg>
<svg style="left:156.00px;top:250.10px;" width="7" height="7" viewBox="0 0 7 7"><circle cx="3.5" cy="3.5" r="3.1" fill="#ededed"/></svg>
<svg style="left:173.00px;top:247.60px;" width="15" height="12" viewBox="0 0 15 12"><rect x="0.5" y="2.5" width="2.5" height="2.5" fill="#5f9c6a"/><rect x="0.5" y="5" width="2.5" height="2.5" fill="#cfeccf"/><rect x="0.5" y="7.5" width="2.5" height="2.5" fill="#3f6f4a"/><rect x="0.5" y="10" width="2.5" height="2.5" fill="#9ad79f"/><rect x="3" y="0" width="2.5" height="2.5" fill="#3f6f4a"/><rect x="3" y="2.5" width="2.5" height="2.5" fill="#5f9c6a"/><rect x="3" y="5" width="2.5" height="2.5" fill="#3f6f4a"/><rect x="3" y="7.5" width="2.5" height="2.5" fill="#5f9c6a"/><rect x="3" y="10" width="2.5" height="2.5" fill="#3f6f4a"/><rect x="5.5" y="0" width="2.5" height="2.5" fill="#cfeccf"/><rect x="5.5" y="2.5" width="2.5" height="2.5" fill="#5f9c6a"/><rect x="5.5" y="5" width="2.5" height="2.5" fill="#9ad79f"/><rect x="5.5" y="7.5" width="2.5" height="2.5" fill="#3f6f4a"/><rect x="5.5" y="10" width="2.5" height="2.5" fill="#cfeccf"/><rect x="8" y="0" width="2.5" height="2.5" fill="#5f9c6a"/><rect x="8" y="2.5" width="2.5" height="2.5" fill="#5f9c6a"/><rect x="8" y="5" width="2.5" height="2.5" fill="#5f9c6a"/><rect x="8" y="7.5" width="2.5" height="2.5" fill="#5f9c6a"/><rect x="8" y="10" width="2.5" height="2.5" fill="#5f9c6a"/><rect x="10.5" y="0" width="2.5" height="2.5" fill="#9ad79f"/><rect x="10.5" y="2.5" width="2.5" height="2.5" fill="#5f9c6a"/><rect x="10.5" y="5" width="2.5" height="2.5" fill="#cfeccf"/><rect x="10.5" y="7.5" width="2.5" height="2.5" fill="#3f6f4a"/><rect x="10.5" y="10" width="2.5" height="2.5" fill="#9ad79f"/><rect x="13" y="2.5" width="2.5" height="2.5" fill="#5f9c6a"/><rect x="13" y="5" width="2.5" height="2.5" fill="#3f6f4a"/><rect x="13" y="7.5" width="2.5" height="2.5" fill="#5f9c6a"/><rect x="13" y="10" width="2.5" height="2.5" fill="#3f6f4a"/></svg>
<span class="t" style="left:192.30px;top:246.14px;font-size:12px;line-height:16px;color:#e2e2e2;letter-spacing:0.005px;">TransitionNoise</span>
<div style="left:470.80px;top:245.60px;width:21.20px;height:15.80px;background:#2a2a2a;border-radius:3px;"></div>
<svg style="left:473.30px;top:249.50px;" width="6" height="8" viewBox="0 0 6 8"><path d="M6 0.5H3.6L0.3 4L3.6 7.5H6Z" fill="#777"/></svg>
<svg style="left:484.00px;top:249.50px;" width="6" height="8" viewBox="0 0 6 8"><path d="M0 0.5H2.4L5.7 4L2.4 7.5H0Z" fill="#c95cec"/></svg>
<svg style="left:497.00px;top:248.60px;" width="10" height="10" viewBox="0 0 10 10"><circle cx="5" cy="5" r="4.2" fill="none" stroke="#a0a0a0" stroke-width="1"/></svg>
</div>
<div style="left:1005.30px;top:711.70px;width:13.70px;height:250.30px;background:#343434;"></div>
<div style="left:1007.40px;top:713.40px;width:9.60px;height:118.60px;background:#505050;border-radius:4.8px;"></div>
<div style="left:495.00px;top:964.50px;width:508.00px;height:9.20px;background:#4d4d4d;border-radius:5px;"></div>
<div style="left:494.00px;top:975.50px;width:525.00px;height:22.50px;background:#454545;"></div>
<div style="left:497.30px;top:977.60px;width:19.30px;height:18.40px;background:#2a2a2a;border-radius:3.5px;box-shadow:0 0 0 1px #383838 inset;"></div>
<svg style="left:500.00px;top:982.50px;" width="14" height="9" viewBox="0 0 14 9"><path d="M4.5 0.5H13.5V8.5H4.5L0.5 4.5Z" fill="#dedede"/><circle cx="4.6" cy="4.5" r="1.4" fill="#2a2a2a"/></svg>
<span class="t" style="left:521.00px;top:979.94px;font-size:12px;line-height:16px;color:#e2e2e2;letter-spacing:-0.300px;">1 selected</span>
<div style="left:810.50px;top:977.60px;width:19.00px;height:18.40px;background:#2a2a2a;border-radius:3.5px;box-shadow:0 0 0 1px #383838 inset;"></div>
<svg style="left:814.50px;top:981.30px;" width="11" height="11" viewBox="0 0 11 11"><rect x="0.6" y="0.6" width="9.8" height="9.8" fill="none" stroke="#dedede" stroke-width="1.1"/><rect x="4" y="4" width="3" height="3" fill="#dedede"/></svg>
<div style="left:833.50px;top:978.00px;width:181.50px;height:18.00px;background:#595959;border-radius:3px;"></div>
<div style="left:834.50px;top:979.00px;width:85.00px;height:16.00px;background:#2a2a2a;border-radius:2.5px;"></div>
<svg style="left:840.00px;top:982.30px;" width="12" height="10" viewBox="0 0 12 10"><path d="M0 1H12M2.5 5H9.5M0 9H12" stroke="#2ecc71" stroke-width="1.6"/></svg>
<span class="t" style="left:856.50px;top:979.94px;font-size:12px;line-height:16px;color:#e2e2e2;letter-spacing:-0.090px;">Time Editor</span>
<svg style="left:928.00px;top:981.50px;" width="12" height="11" viewBox="0 0 12 11"><path d="M1 0V10.5H12" fill="none" stroke="#cfcfcf" stroke-width="1.1"/><path d="M2.5 8.5Q6 8 11.5 1.5" fill="none" stroke="#cfcfcf" stroke-width="1.1"/></svg>
<span class="t" style="left:945.00px;top:979.94px;font-size:12px;line-height:16px;color:#e2e2e2;letter-spacing:-0.094px;">Graph Editor</span>
<div style="left:1019.00px;top:670.00px;width:7.00px;height:328.00px;background:#1f1f1f;"></div>
<div style="left:1021.60px;top:828.00px;width:1.40px;height:1.40px;background:#9a9a9a;"></div>
<div style="left:1021.60px;top:831.00px;width:1.40px;height:1.40px;background:#9a9a9a;"></div>
<div style="left:1021.60px;top:834.00px;width:1.40px;height:1.40px;background:#9a9a9a;"></div>
<div style="left:1021.60px;top:837.00px;width:1.40px;height:1.40px;background:#9a9a9a;"></div>
<div style="left:1021.60px;top:840.00px;width:1.40px;height:1.40px;background:#9a9a9a;"></div>
<div style="left:1021.60px;top:843.00px;width:1.40px;height:1.40px;background:#9a9a9a;"></div>
<div style="left:1026.00px;top:670.00px;width:888.00px;height:328.00px;background:#282828;"></div>
<svg style="left:0.00px;top:0.00px;pointer-events:none;" width="1920" height="1030" viewBox="0 0 1920 1030"><rect x="1033.25" y="686.3" width="1" height="7.7" fill="#a6a6a6"/><rect x="1043.71" y="690.6" width="1" height="3.4" fill="#8c8c8c"/><rect x="1054.17" y="690.6" width="1" height="3.4" fill="#8c8c8c"/><rect x="1064.63" y="690.6" width="1" height="3.4" fill="#8c8c8c"/><rect x="1075.09" y="690.6" width="1" height="3.4" fill="#8c8c8c"/><rect x="1085.55" y="686.3" width="1" height="7.7" fill="#a6a6a6"/><rect x="1096.01" y="690.6" width="1" height="3.4" fill="#8c8c8c"/><rect x="1106.47" y="690.6" width="1" height="3.4" fill="#8c8c8c"/><rect x="1116.93" y="690.6" width="1" height="3.4" fill="#8c8c8c"/><rect x="1127.39" y="690.6" width="1" height="3.4" fill="#8c8c8c"/><rect x="1137.85" y="686.3" width="1" height="7.7" fill="#a6a6a6"/><rect x="1148.30" y="690.6" width="1" height="3.4" fill="#8c8c8c"/><rect x="1158.76" y="690.6" width="1" height="3.4" fill="#8c8c8c"/><rect x="1169.22" y="690.6" width="1" height="3.4" fill="#8c8c8c"/><rect x="1179.68" y="690.6" width="1" height="3.4" fill="#8c8c8c"/><rect x="1190.14" y="686.3" width="1" height="7.7" fill="#a6a6a6"/><rect x="1200.60" y="690.6" width="1" height="3.4" fill="#8c8c8c"/><rect x="1211.06" y="690.6" width="1" height="3.4" fill="#8c8c8c"/><rect x="1221.52" y="690.6" width="1" height="3.4" fill="#8c8c8c"/><rect x="1231.98" y="690.6" width="1" height="3.4" fill="#8c8c8c"/><rect x="1242.44" y="686.3" width="1" height="7.7" fill="#a6a6a6"/><rect x="1252.90" y="690.6" width="1" height="3.4" fill="#8c8c8c"/><rect x="1263.36" y="690.6" width="1" height="3.4" fill="#8c8c8c"/><rect x="1273.82" y="690.6" width="1" height="3.4" fill="#8c8c8c"/><rect x="1284.28" y="690.6" width="1" height="3.4" fill="#8c8c8c"/><rect x="1294.74" y="686.3" width="1" height="7.7" fill="#a6a6a6"/><rect x="1305.20" y="690.6" width="1" height="3.4" fill="#8c8c8c"/><rect x="1315.66" y="690.6" width="1" height="3.4" fill="#8c8c8c"/><rect x="1326.12" y="690.6" width="1" height="3.4" fill="#8c8c8c"/><rect x="1336.58" y="690.6" width="1" height="3.4" fill="#8c8c8c"/><rect x="1347.03" y="686.3" width="1" height="7.7" fill="#a6a6a6"/><rect x="1357.49" y="690.6" width="1" height="3.4" fill="#8c8c8c"/><rect x="1367.95" y="690.6" width="1" height="3.4" fill="#8c8c8c"/><rect x="1378.41" y="690.6" width="1" height="3.4" fill="#8c8c8c"/><rect x="1388.87" y="690.6" width="1" height="3.4" fill="#8c8c8c"/><rect x="1399.33" y="686.3" width="1" height="7.7" fill="#a6a6a6"/><rect x="1409.79" y="690.6" width="1" height="3.4" fill="#8c8c8c"/><rect x="1420.25" y="690.6" width="1" height="3.4" fill="#8c8c8c"/><rect x="1430.71" y="690.6" width="1" height="3.4" fill="#8c8c8c"/><rect x="1441.17" y="690.6" width="1" height="3.4" fill="#8c8c8c"/><rect x="1451.63" y="686.3" width="1" height="7.7" fill="#a6a6a6"/><rect x="1462.09" y="690.6" width="1" height="3.4" fill="#8c8c8c"/><rect x="1472.55" y="690.6" width="1" height="3.4" fill="#8c8c8c"/><rect x="1483.01" y="690.6" width="1" height="3.4" fill="#8c8c8c"/><rect x="1493.47" y="690.6" width="1" height="3.4" fill="#8c8c8c"/><rect x="1503.93" y="686.3" width="1" height="7.7" fill="#a6a6a6"/><rect x="1514.39" y="690.6" width="1" height="3.4" fill="#8c8c8c"/><rect x="1524.85" y="690.6" width="1" height="3.4" fill="#8c8c8c"/><rect x="1535.31" y="690.6" width="1" height="3.4" fill="#8c8c8c"/><rect x="1545.77" y="690.6" width="1" height="3.4" fill="#8c8c8c"/><rect x="1556.22" y="686.3" width="1" height="7.7" fill="#a6a6a6"/><rect x="1566.68" y="690.6" width="1" height="3.4" fill="#8c8c8c"/><rect x="1577.14" y="690.6" width="1" height="3.4" fill="#8c8c8c"/><rect x="1587.60" y="690.6" width="1" height="3.4" fill="#8c8c8c"/><rect x="1598.06" y="690.6" width="1" height="3.4" fill="#8c8c8c"/><rect x="1608.52" y="686.3" width="1" height="7.7" fill="#a6a6a6"/><rect x="1618.98" y="690.6" width="1" height="3.4" fill="#8c8c8c"/><rect x="1629.44" y="690.6" width="1" height="3.4" fill="#8c8c8c"/><rect x="1639.90" y="690.6" width="1" height="3.4" fill="#8c8c8c"/><rect x="1650.36" y="690.6" width="1" height="3.4" fill="#8c8c8c"/><rect x="1660.82" y="686.3" width="1" height="7.7" fill="#a6a6a6"/><rect x="1671.28" y="690.6" width="1" height="3.4" fill="#8c8c8c"/><rect x="1681.74" y="690.6" width="1" height="3.4" fill="#8c8c8c"/><rect x="1692.20" y="690.6" width="1" height="3.4" fill="#8c8c8c"/><rect x="1702.66" y="690.6" width="1" height="3.4" fill="#8c8c8c"/><rect x="1713.12" y="686.3" width="1" height="7.7" fill="#a6a6a6"/><rect x="1723.58" y="690.6" width="1" height="3.4" fill="#8c8c8c"/><rect x="1734.04" y="690.6" width="1" height="3.4" fill="#8c8c8c"/><rect x="1744.50" y="690.6" width="1" height="3.4" fill="#8c8c8c"/><rect x="1754.96" y="690.6" width="1" height="3.4" fill="#8c8c8c"/><rect x="1765.41" y="686.3" width="1" height="7.7" fill="#a6a6a6"/><rect x="1775.87" y="690.6" width="1" height="3.4" fill="#8c8c8c"/><rect x="1786.33" y="690.6" width="1" height="3.4" fill="#8c8c8c"/><rect x="1796.79" y="690.6" width="1" height="3.4" fill="#8c8c8c"/><rect x="1807.25" y="690.6" width="1" height="3.4" fill="#8c8c8c"/><rect x="1817.71" y="686.3" width="1" height="7.7" fill="#a6a6a6"/><rect x="1828.17" y="690.6" width="1" height="3.4" fill="#8c8c8c"/><rect x="1838.63" y="690.6" width="1" height="3.4" fill="#8c8c8c"/><rect x="1849.09" y="690.6" width="1" height="3.4" fill="#8c8c8c"/><rect x="1859.55" y="690.6" width="1" height="3.4" fill="#8c8c8c"/><rect x="1870.01" y="686.3" width="1" height="7.7" fill="#a6a6a6"/><rect x="1880.47" y="690.6" width="1" height="3.4" fill="#8c8c8c"/><rect x="1890.93" y="690.6" width="1" height="3.4" fill="#8c8c8c"/><rect x="1901.39" y="690.6" width="1" height="3.4" fill="#8c8c8c"/></svg>
<span class="t" style="left:1029.11px;top:670.94px;font-size:12px;line-height:16px;color:#dcdcdc;">0</span>
<span class="t" style="left:1078.77px;top:670.94px;font-size:12px;line-height:16px;color:#dcdcdc;">15</span>
<span class="t" style="left:1131.07px;top:670.94px;font-size:12px;line-height:16px;color:#dcdcdc;">30</span>
<span class="t" style="left:1183.37px;top:670.94px;font-size:12px;line-height:16px;color:#dcdcdc;">45</span>
<span class="t" style="left:1235.67px;top:670.94px;font-size:12px;line-height:16px;color:#dcdcdc;">60</span>
<span class="t" style="left:1287.96px;top:670.94px;font-size:12px;line-height:16px;color:#dcdcdc;">75</span>
<span class="t" style="left:1340.26px;top:670.94px;font-size:12px;line-height:16px;color:#dcdcdc;">90</span>
<span class="t" style="left:1389.22px;top:670.94px;font-size:12px;line-height:16px;color:#dcdcdc;">105</span>
<span class="t" style="left:1441.52px;top:670.94px;font-size:12px;line-height:16px;color:#dcdcdc;">120</span>
<span class="t" style="left:1493.82px;top:670.94px;font-size:12px;line-height:16px;color:#dcdcdc;">135</span>
<span class="t" style="left:1546.11px;top:670.94px;font-size:12px;line-height:16px;color:#dcdcdc;">150</span>
<span class="t" style="left:1598.41px;top:670.94px;font-size:12px;line-height:16px;color:#dcdcdc;">165</span>
<span class="t" style="left:1650.71px;top:670.94px;font-size:12px;line-height:16px;color:#dcdcdc;">180</span>
<span class="t" style="left:1703.01px;top:670.94px;font-size:12px;line-height:16px;color:#dcdcdc;">195</span>
<span class="t" style="left:1755.30px;top:670.94px;font-size:12px;line-height:16px;color:#dcdcdc;">210</span>
<span class="t" style="left:1807.60px;top:670.94px;font-size:12px;line-height:16px;color:#dcdcdc;">225</span>
<span class="t" style="left:1859.90px;top:670.94px;font-size:12px;line-height:16px;color:#dcdcdc;">240</span>
<div style="left:1034.00px;top:694.30px;width:871.50px;height:16.20px;background:#464646;"></div>
<div style="left:1029.00px;top:693.00px;width:5.00px;height:17.70px;background:#6fcdb4;border-radius:1.5px;"></div>
<div style="left:1905.30px;top:693.00px;width:5.00px;height:17.70px;background:#6fcdb4;border-radius:1.5px;"></div>
<div style="left:1026px;top:711.7px;width:888px;height:250.3px;overflow:hidden;">
<div style="left:8.00px;top:2.55px;width:870.80px;height:17.65px;background:#c4c4c4;border-radius:3.5px;box-shadow:0 0 0 1px #1f1f1f;"></div>
<div style="left:0.00px;top:1.05px;width:7.00px;height:20.65px;background:#222;"></div>
<span class="t" style="left:16.30px;top:3.79px;font-size:12px;line-height:16px;color:#1c1c1c;">3</span>
<div style="left:8.00px;top:24.55px;width:870.80px;height:17.65px;background:repeating-linear-gradient(135deg,#ecfd98 0,#ecfd98 0.9px,#cdf283 1.6px,#cdf283 6.3px,#d9f78d 6.9px,#cdf283 7.6px,#cdf283 12.9px,#c2e67b 13.5px,#b9dc74 14.2px,#b9dc74 24.37px,#c6e87c 25.17px);box-shadow:0 0 0 1px #1f1f1f;"></div>
<span class="t" style="left:16.30px;top:25.79px;font-size:12px;line-height:16px;color:#1c1c1c;letter-spacing:0.041px;">TransitionNoise</span>
<div style="left:249.83px;top:53.25px;width:122.49px;height:2.10px;background:#c6ef7e;"></div>
<svg style="left:240.23px;top:49.65px;" width="9.2" height="9.2" viewBox="0 0 9.2 9.2"><path d="M4.6 0.2L9 4.6L4.6 9L0.2 4.6Z" fill="#d2d2d2"/></svg>
<svg style="left:372.72px;top:49.65px;" width="9.2" height="9.2" viewBox="0 0 9.2 9.2"><path d="M4.6 0.2L9 4.6L4.6 9L0.2 4.6Z" fill="#d2d2d2"/></svg>
<div style="left:8.00px;top:68.55px;width:870.80px;height:17.65px;background:repeating-linear-gradient(135deg,#ecfd98 0,#ecfd98 0.9px,#cdf283 1.6px,#cdf283 6.3px,#d9f78d 6.9px,#cdf283 7.6px,#cdf283 12.9px,#c2e67b 13.5px,#b9dc74 14.2px,#b9dc74 24.37px,#c6e87c 25.17px);box-shadow:0 0 0 1px #1f1f1f;"></div>
<span class="t" style="left:16.30px;top:69.79px;font-size:12px;line-height:16px;color:#1c1c1c;letter-spacing:-0.049px;">Frame [Start Angle]</span>
<div style="left:8.00px;top:90.55px;width:870.80px;height:17.65px;background:#ffe77f;border-radius:3.5px;box-shadow:0 0 0 1px #1f1f1f;"></div>
<span class="t" style="left:16.30px;top:91.79px;font-size:12px;line-height:16px;color:#1c1c1c;letter-spacing:0.061px;">RingDuplicator</span>
<div style="left:8.00px;top:112.55px;width:870.80px;height:17.65px;background:#ffe77f;border-radius:3.5px;box-shadow:0 0 0 1px #1f1f1f;"></div>
<span class="t" style="left:16.30px;top:113.79px;font-size:12px;line-height:16px;color:#1c1c1c;letter-spacing:-0.421px;">Ellipse Shape 2</span>
<div style="left:8.00px;top:134.55px;width:870.80px;height:17.65px;background:repeating-linear-gradient(135deg,#ecfd98 0,#ecfd98 0.9px,#cdf283 1.6px,#cdf283 6.3px,#d9f78d 6.9px,#cdf283 7.6px,#cdf283 12.9px,#c2e67b 13.5px,#b9dc74 14.2px,#b9dc74 24.37px,#c6e87c 25.17px);box-shadow:0 0 0 1px #1f1f1f;"></div>
<span class="t" style="left:16.30px;top:135.79px;font-size:12px;line-height:16px;color:#1c1c1c;letter-spacing:0.198px;">TransitionOffset</span>
<div style="left:8.00px;top:156.55px;width:870.80px;height:17.65px;background:repeating-linear-gradient(135deg,#ecfd98 0,#ecfd98 0.9px,#cdf283 1.6px,#cdf283 6.3px,#d9f78d 6.9px,#cdf283 7.6px,#cdf283 12.9px,#c2e67b 13.5px,#b9dc74 14.2px,#b9dc74 24.37px,#c6e87c 25.17px);"></div>
<div style="left:8.00px;top:156.30px;width:870.80px;height:18.00px;background-image:linear-gradient(90deg,rgba(238,251,170,.95) 0,rgba(238,251,170,.95) 1px,rgba(0,0,0,0) 1px,rgba(0,0,0,0) 2px),linear-gradient(0deg,rgba(238,251,170,.95) 0,rgba(238,251,170,.95) 1px,rgba(0,0,0,0) 1px,rgba(0,0,0,0) 2px),linear-gradient(rgba(110,165,35,.32),rgba(110,165,35,.32));background-size:2px 2px;"></div>
<div style="left:8.00px;top:156.55px;width:870.80px;height:17.65px;box-shadow:0 0 0 1px #fff inset;"></div>
<span class="t" style="left:16.30px;top:157.79px;font-size:12px;line-height:16px;color:#1c1c1c;letter-spacing:0.381px;">2to3</span>
<svg style="left:135.64px;top:181.65px;" width="9.2" height="9.2" viewBox="0 0 9.2 9.2"><path d="M4.6 0.2L9 4.6L4.6 9L0.2 4.6Z" fill="#d2d2d2"/></svg>
<div style="left:8.00px;top:200.55px;width:870.80px;height:17.65px;background:#c4c4c4;border-radius:3.5px;box-shadow:0 0 0 1px #1f1f1f;"></div>
<div style="left:0.00px;top:199.05px;width:7.00px;height:20.65px;background:#222;"></div>
<span class="t" style="left:16.30px;top:201.79px;font-size:12px;line-height:16px;color:#1c1c1c;">2</span>
<div style="left:8.00px;top:222.55px;width:870.80px;height:17.65px;background:repeating-linear-gradient(135deg,#ecfd98 0,#ecfd98 0.9px,#cdf283 1.6px,#cdf283 6.3px,#d9f78d 6.9px,#cdf283 7.6px,#cdf283 12.9px,#c2e67b 13.5px,#b9dc74 14.2px,#b9dc74 24.37px,#c6e87c 25.17px);box-shadow:0 0 0 1px #1f1f1f;"></div>
<span class="t" style="left:16.30px;top:223.79px;font-size:12px;line-height:16px;color:#1c1c1c;letter-spacing:-0.443px;">Random [Shape Scale]</span>
<div style="left:8.00px;top:244.55px;width:870.80px;height:17.65px;background:repeating-linear-gradient(135deg,#ecfd98 0,#ecfd98 0.9px,#cdf283 1.6px,#cdf283 6.3px,#d9f78d 6.9px,#cdf283 7.6px,#cdf283 12.9px,#c2e67b 13.5px,#b9dc74 14.2px,#b9dc74 24.37px,#c6e87c 25.17px);box-shadow:0 0 0 1px #1f1f1f;"></div>
<span class="t" style="left:16.30px;top:245.79px;font-size:12px;line-height:16px;color:#1c1c1c;letter-spacing:0.041px;">TransitionNoise</span>
</div>
<div style="left:1165.74px;top:692.00px;width:1.00px;height:270.00px;background:#63c3a9;"></div>
<svg style="left:1158.54px;top:683.30px;" width="15.4" height="9.6" viewBox="0 0 15.4 9.6"><path d="M0 0H15.4L7.7 9.6Z" fill="#6fcdb4"/></svg>
<div style="left:1027.00px;top:964.30px;width:886.00px;height:9.50px;background:#4d4d4d;border-radius:5px;"></div>
<div style="left:1026.00px;top:976.00px;width:888.00px;height:22.00px;background:#454545;"></div>
<div style="left:1029.50px;top:978.00px;width:17.50px;height:18.00px;background:#2a2a2a;border-radius:3.5px;box-shadow:0 0 0 1px #383838 inset;"></div>
<svg style="left:1031.50px;top:981.00px;" width="14" height="12" viewBox="0 0 14 12"><path d="M0 1H13M0 5H13" stroke="#dedede" stroke-width="1.6"/><path d="M0 9H3M5 9H8" stroke="#dedede" stroke-width="1.6"/><path d="M14 9V12.5H10.5Z" fill="#6fcdb4"/></svg>
<div style="left:1050.00px;top:979.00px;width:149.50px;height:16.50px;background:#2a2a2a;border-radius:2.5px;"></div>
<span class="t" style="left:1052.50px;top:979.94px;font-size:12px;line-height:16px;color:#e2e2e2;letter-spacing:-0.122px;">Default Keyframe Layer</span>
<div style="left:1206.00px;top:979.00px;width:70.00px;height:16.50px;background:#2a2a2a;border-radius:2.5px;"></div>
<span class="t" style="left:1211.00px;top:979.94px;font-size:12px;line-height:16px;color:#4a4a4a;">F</span>
<span class="t" style="left:1223.00px;top:979.94px;font-size:12px;line-height:16px;color:#cfcfcf;">-</span>
<span class="t" style="left:1282.50px;top:980.14px;font-size:12px;line-height:16px;color:#e2e2e2;letter-spacing:-0.204px;">Align:</span>
<div style="left:1318.50px;top:978.50px;width:53.00px;height:17.50px;background:#242424;border-radius:3.5px;box-shadow:0 0 0 0.6px #5a5a5a;"></div>
<div style="left:1336.30px;top:978.50px;width:0.70px;height:17.50px;background:#3c3c3c;"></div>
<div style="left:1353.80px;top:978.50px;width:0.70px;height:17.50px;background:#3c3c3c;"></div>
<svg style="left:1319.00px;top:979.00px;" width="17" height="17" viewBox="0 0 17 17"><path d="M2.6 2V15" stroke="#e6e6e6" stroke-width="1"/><rect x="5" y="4.6" width="2" height="2" fill="#7fd8c0"/><rect x="8" y="4.8" width="3.2" height="1.6" fill="#e6e6e6"/><rect x="5" y="10.4" width="2" height="2" fill="#7fd8c0"/><rect x="8" y="10.6" width="7" height="1.6" fill="#e6e6e6"/></svg>
<svg style="left:1337.00px;top:979.00px;" width="17" height="17" viewBox="0 0 17 17"><path d="M8.5 1.5V15.5" stroke="#e6e6e6" stroke-width="1"/><rect x="7.5" y="4.6" width="2" height="2" fill="#7fd8c0"/><rect x="7.5" y="10.4" width="2" height="2" fill="#7fd8c0"/><path d="M4.3 5.6H6.5M10.5 5.6H12.7M2.8 11.4H6.5M10.5 11.4H14.2" stroke="#e6e6e6" stroke-width="1.6"/></svg>
<svg style="left:1354.50px;top:979.00px;" width="17" height="17" viewBox="0 0 17 17"><path d="M14.4 2V15" stroke="#e6e6e6" stroke-width="1"/><rect x="10" y="4.6" width="2" height="2" fill="#7fd8c0"/><rect x="5.8" y="4.8" width="3.2" height="1.6" fill="#e6e6e6"/><rect x="10" y="10.4" width="2" height="2" fill="#7fd8c0"/><rect x="2" y="10.6" width="7" height="1.6" fill="#e6e6e6"/></svg>
<div style="left:1376.30px;top:978.50px;width:15.70px;height:17.50px;background:#404040;border-radius:3.5px;box-shadow:0 0 0 1px #303030;"></div>
<svg style="left:1377.20px;top:980.20px;" width="14" height="14" viewBox="0 0 14 14"><rect x="1.5" y="1.5" width="11" height="11" fill="none" stroke="#a8a8a8" stroke-width="0.9"/><rect x="0.3" y="0.3" width="2.4" height="2.4" fill="#a8a8a8"/><rect x="11.3" y="0.3" width="2.4" height="2.4" fill="#a8a8a8"/><rect x="0.3" y="11.3" width="2.4" height="2.4" fill="#a8a8a8"/><rect x="11.3" y="11.3" width="2.4" height="2.4" fill="#a8a8a8"/><rect x="6.1" y="6.1" width="1.8" height="1.8" fill="#dedede"/></svg>
<div style="left:1397.00px;top:978.00px;width:30.00px;height:18.00px;background:#404040;border-radius:3.5px;box-shadow:0 0 0 1px #303030;"></div>
<div style="left:1415.30px;top:978.00px;width:11.70px;height:18.00px;background:#2c2c2c;border-radius:0 3.5px 3.5px 0;"></div>
<svg style="left:1418.50px;top:983.50px;" width="6" height="7" viewBox="0 0 6 7"><path d="M0.6 0.7L5 3.5L0.6 6.3Z" fill="none" stroke="#7c7c7c" stroke-width="1"/></svg>
<div style="left:1431.50px;top:978.00px;width:30.50px;height:18.00px;background:#404040;border-radius:3.5px;box-shadow:0 0 0 1px #303030;"></div>
<div style="left:1449.80px;top:978.00px;width:12.20px;height:18.00px;background:#2c2c2c;border-radius:0 3.5px 3.5px 0;"></div>
<svg style="left:1453.00px;top:983.50px;" width="6" height="7" viewBox="0 0 6 7"><path d="M0.6 0.7L5 3.5L0.6 6.3Z" fill="none" stroke="#7c7c7c" stroke-width="1"/></svg>
<svg style="left:1399.50px;top:980.50px;" width="13" height="13" viewBox="0 0 13 13"><g transform="rotate(135 6.5 6.5)"><path d="M2.4 1.5V6.2A4.1 4.1 0 0 0 10.6 6.2V1.5" fill="none" stroke="#dedede" stroke-width="2.3"/><path d="M0.8 2.2H4M9 2.2H12.2" stroke="#404040" stroke-width="0.7"/></g></svg>
<svg style="left:1434.00px;top:981.00px;" width="14" height="12" viewBox="0 0 14 12"><path d="M0 6.3H2.5M10.5 6.3H14" stroke="#dedede" stroke-width="1"/><path d="M4.5 0V12.5" stroke="#dedede" stroke-width="1"/><path d="M8 3.5V9" stroke="#dedede" stroke-width="1.2"/></svg>
<svg style="left:1743.00px;top:980.00px;" width="15" height="15" viewBox="0 0 15 15"><circle cx="6" cy="6" r="5" fill="none" stroke="#d0d0d0" stroke-width="1"/><path d="M3.5 6H8.5" stroke="#d0d0d0" stroke-width="1"/><path d="M10 10L13.5 13.5" stroke="#d0d0d0" stroke-width="1.8"/></svg>
<div style="left:1770.00px;top:986.00px;width:112.00px;height:2.40px;background:#535353;border-radius:1.2px;"></div>
<svg style="left:1761.50px;top:981.50px;" width="11" height="11" viewBox="0 0 11 11"><circle cx="5.5" cy="5.5" r="5.2" fill="#6fcdb4"/><circle cx="5.5" cy="5.5" r="2" fill="#4fa890"/></svg>
<svg style="left:1887.00px;top:980.00px;" width="15" height="15" viewBox="0 0 15 15"><circle cx="6" cy="6" r="5" fill="none" stroke="#d0d0d0" stroke-width="1"/><path d="M3.5 6H8.5M6 3.5V8.5" stroke="#d0d0d0" stroke-width="1"/><path d="M10 10L13.5 13.5" stroke="#d0d0d0" stroke-width="1.8"/></svg>
<div style="left:494.00px;top:1004.30px;width:1420.00px;height:21.50px;background:#3c3c3c;"></div>
<div style="left:498.00px;top:1009.90px;width:2.00px;height:2.00px;background:#9a9a9a;"></div>
<div style="left:498.00px;top:1013.80px;width:2.00px;height:2.00px;background:#9a9a9a;"></div>
<div style="left:498.00px;top:1017.90px;width:2.00px;height:2.00px;background:#9a9a9a;"></div>
<div style="left:506.50px;top:1006.50px;width:18.50px;height:17.50px;background:#2a2a2a;border-radius:3.5px;box-shadow:0 0 0 1px #383838 inset;"></div>
<svg style="left:509.30px;top:1008.30px;" width="15" height="14" viewBox="0 0 15 14"><path d="M0 0H11.5V8.8H11.5V11.5L8 8.8H0Z" fill="#e4e4e4"/><path d="M1.5 2.2H2.7M1.5 4.4H2.7M1.5 6.6H2.7M3.8 2.2H10M3.8 4.4H10M3.8 6.6H10" stroke="#2a2a2a" stroke-width="1"/><path d="M15 10.5V14H11.5Z" fill="#6fcdb4"/></svg>
<div style="left:528.00px;top:1008.00px;width:18.00px;height:14.00px;background:#e07c7c;border-radius:2.5px;"></div>
<span class="t" style="left:531.50px;top:1007.93px;font-size:11.5px;line-height:15px;color:#2a2a2a;letter-spacing:-1.112px;">9+</span>
<svg style="left:553.50px;top:1011.60px;" width="7" height="7" viewBox="0 0 7 7"><circle cx="3.5" cy="3.5" r="3.2" fill="#e07c7c"/></svg>
<span class="t" style="left:565.00px;top:1007.64px;font-size:12px;line-height:16px;color:#e2e2e2;letter-spacing:-0.249px;">Save reminder: 31 minutes since your last save.</span>
<span class="t" style="left:1349.00px;top:1007.44px;font-size:12px;line-height:16px;color:#ececec;letter-spacing:-0.753px;font-style:italic;">Click to see next message</span>
<div style="left:1477.00px;top:1006.70px;width:80.00px;height:17.00px;background:#d6bc6c;border-radius:2px;"></div>
<span class="t" style="left:1482.00px;top:1007.64px;font-size:12px;line-height:16px;color:#1a1a1a;letter-spacing:-0.314px;">Feedback</span>
<div style="left:1560.00px;top:1006.70px;width:109.00px;height:17.00px;background:#2ecc71;border-radius:2px;"></div>
<span class="t" style="left:1565.00px;top:1007.64px;font-size:12px;line-height:16px;color:#1a1a1a;letter-spacing:-0.106px;">Upgrade to Pro</span>
<div style="left:1672.00px;top:1006.70px;width:130.00px;height:17.00px;background:#b896f8;border-radius:2px;"></div>
<span class="t" style="left:1677.00px;top:1007.64px;font-size:12px;line-height:16px;color:#1a1a1a;letter-spacing:-0.099px;">New Beta Available</span>
<div style="left:1805.00px;top:1006.70px;width:106.00px;height:17.00px;background:#38a8f2;border-radius:2px;"></div>
<span class="t" style="left:1810.00px;top:1007.64px;font-size:12px;line-height:16px;color:#1a1a1a;letter-spacing:-0.268px;">Tips and Tricks</span>
<svg style="left:1539.00px;top:1009.00px;" width="11" height="12" viewBox="0 0 11 12"><rect x="0.5" y="0.5" width="8" height="11" fill="#f4f4f4"/><path d="M2 3H7M2 5H7M2 7H5" stroke="#bbb" stroke-width="0.7"/><path d="M4 10L9.5 4.5L11 6L5.5 11.5Z" fill="#f08a3c"/></svg>
<svg style="left:1649.00px;top:1010.00px;" width="14" height="11" viewBox="0 0 14 11"><path d="M1 5Q0 1 3 0.5Q5 0.5 5 4V10.5H2Q0.5 9 1 5Z M13 5Q14 1 11 0.5Q9 0.5 9 4V10.5H12Q13.5 9 13 5Z" fill="#f5c542"/></svg>
<svg style="left:1783.00px;top:1008.50px;" width="13" height="13" viewBox="0 0 13 13"><circle cx="6.5" cy="7.5" r="5.5" fill="#f6c945"/><path d="M3 4L8 0L10 4.5Z" fill="#e255a1"/><path d="M4 9Q6.5 11.5 9 9" fill="none" stroke="#8a4b12" stroke-width="1"/></svg>
<svg style="left:1890.00px;top:1008.50px;" width="13" height="13" viewBox="0 0 13 13"><path d="M12.5 0.5Q7 1 4 5.5L2 8L5 11L7.5 9Q12 6 12.5 0.5Z" fill="#e8e8ee"/><path d="M4 5.5L1 6L0.5 8.5L2.5 8Z M7.5 9L7 12L4.5 12.5L5 10.5Z" fill="#e0475b"/><circle cx="8.8" cy="4.2" r="1.3" fill="#4a90d9"/><path d="M2 11L0.5 12.5" stroke="#f5a623" stroke-width="1.5"/></svg>
<svg style="left:0.00px;top:0.00px;pointer-events:none;" width="1920" height="1030" viewBox="0 0 1920 1030"><path d="M6.3 337V318Q6.3 315 9.3 315H471Q474 315 474 318V337H470.2V316.4H10.2V337Z" fill="#c8f07f"/><rect x="6.7" y="337.55" width="468.75" height="27.75" fill="none" stroke="#b5e61d" stroke-width="3.3"/><path d="M285.2 376L650.2 808.7" stroke="#b5e61d" stroke-width="3"/><path d="M425 484.2L441 501.8H433.3V518.3H416.9V501.8H409Z" fill="none" stroke="#b5e61d" stroke-width="2.2"/><rect x="651.6" y="795.5" width="138.8" height="29.8" fill="none" stroke="#b5e61d" stroke-width="3.3"/><rect x="623.55" y="864.55" width="96.9" height="25.65" fill="none" stroke="#b5e61d" stroke-width="3.3"/><rect x="920.5" y="669.6" width="98" height="24.8" fill="none" stroke="#b5e61d" stroke-width="3.3"/><rect x="901.55" y="884.7" width="103.05" height="29.7" fill="none" stroke="#b5e61d" stroke-width="3.3"/></svg>
<span class="t" style="left:314.60px;top:366.65px;font-size:21.5px;line-height:28px;color:#b5e61d;letter-spacing:-0.592px;font-weight:bold;">drag kesini</span>
<span class="t" style="left:730.80px;top:862.64px;font-size:21px;line-height:27px;color:#b5e61d;letter-spacing:-0.247px;font-weight:bold;">rename it</span>
</body></html>
